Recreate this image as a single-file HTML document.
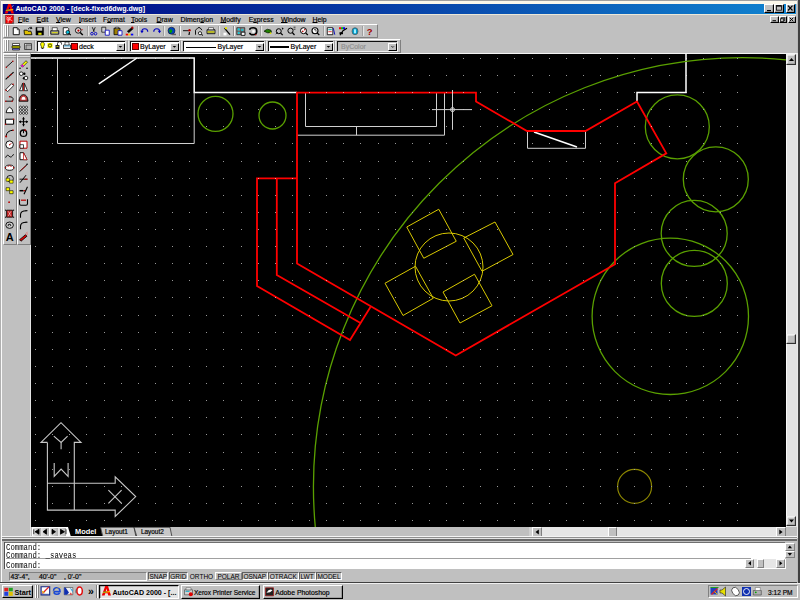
<!DOCTYPE html><html><head><meta charset="utf-8"><style>html,body{margin:0;padding:0;}body{width:800px;height:600px;overflow:hidden;position:relative;background:#c0c0c0;font-family:"Liberation Sans",sans-serif}</style></head><body>
<div style="position:absolute;left:0px;top:0px;width:800px;height:1px;background:#a0a0a0;"></div>
<div style="position:absolute;left:0px;top:1px;width:797px;height:2.5px;background:#fbf7ea;"></div>
<div style="position:absolute;left:0px;top:0px;width:1px;height:583px;background:#b0b0b0;"></div>
<div style="position:absolute;left:1px;top:1px;width:1.3px;height:582px;background:#fafafa;"></div>
<div style="position:absolute;left:3px;top:14px;width:793px;height:1px;background:#ece8d8;"></div>
<div style="position:absolute;left:798px;top:0px;width:2px;height:583px;background:#404040;"></div>
<div style="position:absolute;left:797px;top:0px;width:1px;height:583px;background:#b8b8b8;"></div>
<div style="position:absolute;left:796px;top:53px;width:1.5px;height:485px;background:#e8e8e8;"></div>
<div style="position:absolute;left:3px;top:3.5px;width:793px;height:10.5px;background:linear-gradient(to right,#000080 0%,#1084d0 100%)"></div>
<div style="position:absolute;left:15.4px;top:5.5px;font-family:'Liberation Sans', sans-serif;font-size:7.1px;line-height:1;color:#fff;font-weight:bold;white-space:nowrap;">AutoCAD 2000 - [deck-fixed6dwg.dwg]</div>
<div style="position:absolute;left:18px;top:17.1px;font-family:'Liberation Sans', sans-serif;font-size:6.9px;line-height:1;color:#000;font-weight:normal;white-space:nowrap;-webkit-text-stroke:0.18px #000;text-underline-offset:-0.2px;text-decoration-thickness:0.7px"><u>F</u>ile</div>
<div style="position:absolute;left:36.6px;top:17.1px;font-family:'Liberation Sans', sans-serif;font-size:6.9px;line-height:1;color:#000;font-weight:normal;white-space:nowrap;-webkit-text-stroke:0.18px #000;text-underline-offset:-0.2px;text-decoration-thickness:0.7px"><u>E</u>dit</div>
<div style="position:absolute;left:56px;top:17.1px;font-family:'Liberation Sans', sans-serif;font-size:6.9px;line-height:1;color:#000;font-weight:normal;white-space:nowrap;-webkit-text-stroke:0.18px #000;text-underline-offset:-0.2px;text-decoration-thickness:0.7px"><u>V</u>iew</div>
<div style="position:absolute;left:79px;top:17.1px;font-family:'Liberation Sans', sans-serif;font-size:6.9px;line-height:1;color:#000;font-weight:normal;white-space:nowrap;-webkit-text-stroke:0.18px #000;text-underline-offset:-0.2px;text-decoration-thickness:0.7px"><u>I</u>nsert</div>
<div style="position:absolute;left:103px;top:17.1px;font-family:'Liberation Sans', sans-serif;font-size:6.9px;line-height:1;color:#000;font-weight:normal;white-space:nowrap;-webkit-text-stroke:0.18px #000;text-underline-offset:-0.2px;text-decoration-thickness:0.7px">F<u>o</u>rmat</div>
<div style="position:absolute;left:131px;top:17.1px;font-family:'Liberation Sans', sans-serif;font-size:6.9px;line-height:1;color:#000;font-weight:normal;white-space:nowrap;-webkit-text-stroke:0.18px #000;text-underline-offset:-0.2px;text-decoration-thickness:0.7px"><u>T</u>ools</div>
<div style="position:absolute;left:156.6px;top:17.1px;font-family:'Liberation Sans', sans-serif;font-size:6.9px;line-height:1;color:#000;font-weight:normal;white-space:nowrap;-webkit-text-stroke:0.18px #000;text-underline-offset:-0.2px;text-decoration-thickness:0.7px"><u>D</u>raw</div>
<div style="position:absolute;left:180.5px;top:17.1px;font-family:'Liberation Sans', sans-serif;font-size:6.9px;line-height:1;color:#000;font-weight:normal;white-space:nowrap;-webkit-text-stroke:0.18px #000;text-underline-offset:-0.2px;text-decoration-thickness:0.7px">Dimen<u>s</u>ion</div>
<div style="position:absolute;left:220.4px;top:17.1px;font-family:'Liberation Sans', sans-serif;font-size:6.9px;line-height:1;color:#000;font-weight:normal;white-space:nowrap;-webkit-text-stroke:0.18px #000;text-underline-offset:-0.2px;text-decoration-thickness:0.7px"><u>M</u>odify</div>
<div style="position:absolute;left:248.7px;top:17.1px;font-family:'Liberation Sans', sans-serif;font-size:6.9px;line-height:1;color:#000;font-weight:normal;white-space:nowrap;-webkit-text-stroke:0.18px #000;text-underline-offset:-0.2px;text-decoration-thickness:0.7px">E<u>x</u>press</div>
<div style="position:absolute;left:281px;top:17.1px;font-family:'Liberation Sans', sans-serif;font-size:6.9px;line-height:1;color:#000;font-weight:normal;white-space:nowrap;-webkit-text-stroke:0.18px #000;text-underline-offset:-0.2px;text-decoration-thickness:0.7px"><u>W</u>indow</div>
<div style="position:absolute;left:312.5px;top:17.1px;font-family:'Liberation Sans', sans-serif;font-size:6.9px;line-height:1;color:#000;font-weight:normal;white-space:nowrap;-webkit-text-stroke:0.18px #000;text-underline-offset:-0.2px;text-decoration-thickness:0.7px"><u>H</u>elp</div>
<div style="position:absolute;left:3px;top:24px;width:375px;height:14px;background:#c0c0c0;box-sizing:border-box;border-top:1px solid #fff;border-left:1px solid #fff;border-right:1px solid #808080;border-bottom:1px solid #808080"></div>
<div style="position:absolute;left:3px;top:39px;width:397.5px;height:13.5px;background:#c0c0c0;box-sizing:border-box;border-top:1px solid #fff;border-left:1px solid #fff;border-right:1px solid #808080;border-bottom:1px solid #808080"></div>
<div style="position:absolute;left:3px;top:52.6px;width:794px;height:1px;background:#f4f4f4;"></div>
<div style="position:absolute;left:3px;top:53px;width:14px;height:192px;background:#c0c0c0;box-sizing:border-box;border-top:1px solid #fff;border-left:1px solid #fff;border-right:1px solid #808080;border-bottom:1px solid #808080"></div>
<div style="position:absolute;left:17px;top:53px;width:14px;height:192px;background:#c0c0c0;box-sizing:border-box;border-top:1px solid #fff;border-left:1px solid #fff;border-right:1px solid #808080;border-bottom:1px solid #808080"></div>
<div style="position:absolute;left:31px;top:53.5px;width:755px;height:473.5px;background:#000;"></div>
<svg style="position:absolute;left:0;top:0" width="800" height="600" viewBox="0 0 800 600"><defs><clipPath id="dc"><rect x="31" y="53.5" width="755" height="473.5"/></clipPath></defs><g clip-path="url(#dc)"><path d="M31 58.1 L194.2 58.1 L194.2 92.6 L297 92.6" fill="none" stroke="#ffffff" stroke-width="1.5" stroke-linejoin="miter"/><path d="M57.5 58 L57.5 143.5 L194.2 143.5 L194.2 92.6" fill="none" stroke="#d0d0d0" stroke-width="1.0" stroke-linejoin="miter"/><path d="M137 58 L98.8 83.8" fill="none" stroke="#ffffff" stroke-width="1.5" stroke-linejoin="miter"/><path d="M686 53 L686 92.5 L637 92.5 L637 101.5" fill="none" stroke="#ffffff" stroke-width="1.5" stroke-linejoin="miter"/><path d="M305.5 93 L305.5 126.5 L436.5 126.5 L436.5 93" fill="none" stroke="#d0d0d0" stroke-width="1.0" stroke-linejoin="miter"/><path d="M297 135.2 L444.5 135.2 L444.5 93" fill="none" stroke="#d0d0d0" stroke-width="1.0" stroke-linejoin="miter"/><path d="M356.5 126.5 L356.5 135.2" fill="none" stroke="#d0d0d0" stroke-width="1.0" stroke-linejoin="miter"/><path d="M527.5 131 L527.5 148.3 L585.5 148.3 L585.5 131" fill="none" stroke="#d0d0d0" stroke-width="1.0" stroke-linejoin="miter"/><path d="M534 132 L577 147" fill="none" stroke="#ffffff" stroke-width="1.5" stroke-linejoin="miter"/><circle cx="215.5" cy="113.8" r="17.5" fill="none" stroke="#5aa000" stroke-width="1.3"/><circle cx="272.5" cy="115.5" r="13.5" fill="none" stroke="#5aa000" stroke-width="1.3"/><circle cx="677.3" cy="126.8" r="32" fill="none" stroke="#5aa000" stroke-width="1.3"/><circle cx="715.8" cy="179.3" r="32.5" fill="none" stroke="#5aa000" stroke-width="1.3"/><circle cx="694.2" cy="233.4" r="33" fill="none" stroke="#5aa000" stroke-width="1.3"/><circle cx="694.3" cy="283.4" r="33" fill="none" stroke="#5aa000" stroke-width="1.3"/><circle cx="670.3" cy="316.3" r="78.2" fill="none" stroke="#5aa000" stroke-width="1.3"/><circle cx="742.46" cy="486.64" r="429.03" fill="none" stroke="#5aa000" stroke-width="1.3"/><circle cx="634.6" cy="486.4" r="17" fill="none" stroke="#8c8600" stroke-width="1.2"/><circle cx="449" cy="267" r="34" fill="none" stroke="#d8c800" stroke-width="1.0"/><path d="M406.75 227 L438.75 209.25 L456.25 241.25 L423.75 258.25 Z" fill="none" stroke="#d8c800" stroke-width="1.0" stroke-linejoin="miter"/><path d="M463.75 238 L495 222 L513 254.5 L482 271.25 Z" fill="none" stroke="#d8c800" stroke-width="1.0" stroke-linejoin="miter"/><path d="M443 292 L474.5 274.25 L492 305.75 L460 323 Z" fill="none" stroke="#d8c800" stroke-width="1.0" stroke-linejoin="miter"/><path d="M385 283.25 L415.5 266.25 L433.25 298.25 L403 315.5 Z" fill="none" stroke="#d8c800" stroke-width="1.0" stroke-linejoin="miter"/><path d="M297 92.6 L476 92.6 L476 101.5 L527 131 L585.5 131 L637 101.5 L666.3 153.4 L615 183.3 L615 264.2 L455.75 355.5 L297 263.6 Z" fill="none" stroke="#ff0000" stroke-width="1.8" stroke-linejoin="miter"/><path d="M297 178.3 L257 178.3 L257 286 L350 340 L370.5 307" fill="none" stroke="#ff0000" stroke-width="1.8" stroke-linejoin="miter"/><path d="M276.8 178.3 L276.8 275 L360.5 323" fill="none" stroke="#ff0000" stroke-width="1.8" stroke-linejoin="miter"/><path d="M452.5 90 L452.5 129.8" fill="none" stroke="#d0d0d0" stroke-width="1.0" stroke-linejoin="miter"/><path d="M432 109.6 L472 109.6" fill="none" stroke="#d0d0d0" stroke-width="1.0" stroke-linejoin="miter"/><circle cx="452.5" cy="109.6" r="2" fill="none" stroke="#d0d0d0" stroke-width="1"/><path d="M47.4 442.4 L41 442.4 L61 422.7 L81 442.4 L74.3 442.4 L74.3 510.1" fill="none" stroke="#c8c8c8" stroke-width="1.1" stroke-linejoin="miter"/><path d="M47.4 442.4 L47.4 510.1 L115.2 510.1 L115.2 516.5 L135.7 496.6 L115.2 476.8 L115.2 483.2 L47.4 483.2" fill="none" stroke="#c8c8c8" stroke-width="1.1" stroke-linejoin="miter"/><path d="M53.8 436.1 L61.1 442.5 L67.6 436.1" fill="none" stroke="#c8c8c8" stroke-width="1.1" stroke-linejoin="miter"/><path d="M61.1 442.5 L61.1 449.3" fill="none" stroke="#c8c8c8" stroke-width="1.1" stroke-linejoin="miter"/><path d="M54.2 463 L54.2 476.4 L61.1 469.1 L68.1 476.4 L68.1 463" fill="none" stroke="#c8c8c8" stroke-width="1.1" stroke-linejoin="miter"/><path d="M108.4 490.2 L121.6 503.4" fill="none" stroke="#c8c8c8" stroke-width="1.1" stroke-linejoin="miter"/><path d="M121.6 490.2 L108.4 503.4" fill="none" stroke="#c8c8c8" stroke-width="1.1" stroke-linejoin="miter"/><path d="M35 58h1v1h-1zM52 58h1v1h-1zM69 58h1v1h-1zM86 58h1v1h-1zM104 58h1v1h-1zM121 58h1v1h-1zM138 58h1v1h-1zM155 58h1v1h-1zM172 58h1v1h-1zM189 58h1v1h-1zM206 58h1v1h-1zM223 58h1v1h-1zM241 58h1v1h-1zM258 58h1v1h-1zM275 58h1v1h-1zM292 58h1v1h-1zM309 58h1v1h-1zM326 58h1v1h-1zM343 58h1v1h-1zM360 58h1v1h-1zM378 58h1v1h-1zM395 58h1v1h-1zM412 58h1v1h-1zM429 58h1v1h-1zM446 58h1v1h-1zM463 58h1v1h-1zM480 58h1v1h-1zM497 58h1v1h-1zM514 58h1v1h-1zM532 58h1v1h-1zM549 58h1v1h-1zM566 58h1v1h-1zM583 58h1v1h-1zM600 58h1v1h-1zM617 58h1v1h-1zM634 58h1v1h-1zM651 58h1v1h-1zM669 58h1v1h-1zM686 58h1v1h-1zM703 58h1v1h-1zM720 58h1v1h-1zM737 58h1v1h-1zM35 75h1v1h-1zM52 75h1v1h-1zM69 75h1v1h-1zM86 75h1v1h-1zM104 75h1v1h-1zM121 75h1v1h-1zM138 75h1v1h-1zM155 75h1v1h-1zM172 75h1v1h-1zM189 75h1v1h-1zM206 75h1v1h-1zM223 75h1v1h-1zM241 75h1v1h-1zM258 75h1v1h-1zM275 75h1v1h-1zM292 75h1v1h-1zM309 75h1v1h-1zM326 75h1v1h-1zM343 75h1v1h-1zM360 75h1v1h-1zM378 75h1v1h-1zM395 75h1v1h-1zM412 75h1v1h-1zM429 75h1v1h-1zM446 75h1v1h-1zM463 75h1v1h-1zM480 75h1v1h-1zM497 75h1v1h-1zM514 75h1v1h-1zM532 75h1v1h-1zM549 75h1v1h-1zM566 75h1v1h-1zM583 75h1v1h-1zM600 75h1v1h-1zM617 75h1v1h-1zM634 75h1v1h-1zM651 75h1v1h-1zM669 75h1v1h-1zM686 75h1v1h-1zM703 75h1v1h-1zM720 75h1v1h-1zM737 75h1v1h-1zM35 92h1v1h-1zM52 92h1v1h-1zM69 92h1v1h-1zM86 92h1v1h-1zM104 92h1v1h-1zM121 92h1v1h-1zM138 92h1v1h-1zM155 92h1v1h-1zM172 92h1v1h-1zM189 92h1v1h-1zM206 92h1v1h-1zM223 92h1v1h-1zM241 92h1v1h-1zM258 92h1v1h-1zM275 92h1v1h-1zM292 92h1v1h-1zM309 92h1v1h-1zM326 92h1v1h-1zM343 92h1v1h-1zM360 92h1v1h-1zM378 92h1v1h-1zM395 92h1v1h-1zM412 92h1v1h-1zM429 92h1v1h-1zM446 92h1v1h-1zM463 92h1v1h-1zM480 92h1v1h-1zM497 92h1v1h-1zM514 92h1v1h-1zM532 92h1v1h-1zM549 92h1v1h-1zM566 92h1v1h-1zM583 92h1v1h-1zM600 92h1v1h-1zM617 92h1v1h-1zM634 92h1v1h-1zM651 92h1v1h-1zM669 92h1v1h-1zM686 92h1v1h-1zM703 92h1v1h-1zM720 92h1v1h-1zM737 92h1v1h-1zM35 109h1v1h-1zM52 109h1v1h-1zM69 109h1v1h-1zM86 109h1v1h-1zM104 109h1v1h-1zM121 109h1v1h-1zM138 109h1v1h-1zM155 109h1v1h-1zM172 109h1v1h-1zM189 109h1v1h-1zM206 109h1v1h-1zM223 109h1v1h-1zM241 109h1v1h-1zM258 109h1v1h-1zM275 109h1v1h-1zM292 109h1v1h-1zM309 109h1v1h-1zM326 109h1v1h-1zM343 109h1v1h-1zM360 109h1v1h-1zM378 109h1v1h-1zM395 109h1v1h-1zM412 109h1v1h-1zM429 109h1v1h-1zM446 109h1v1h-1zM463 109h1v1h-1zM480 109h1v1h-1zM497 109h1v1h-1zM514 109h1v1h-1zM532 109h1v1h-1zM549 109h1v1h-1zM566 109h1v1h-1zM583 109h1v1h-1zM600 109h1v1h-1zM617 109h1v1h-1zM634 109h1v1h-1zM651 109h1v1h-1zM669 109h1v1h-1zM686 109h1v1h-1zM703 109h1v1h-1zM720 109h1v1h-1zM737 109h1v1h-1zM35 126h1v1h-1zM52 126h1v1h-1zM69 126h1v1h-1zM86 126h1v1h-1zM104 126h1v1h-1zM121 126h1v1h-1zM138 126h1v1h-1zM155 126h1v1h-1zM172 126h1v1h-1zM189 126h1v1h-1zM206 126h1v1h-1zM223 126h1v1h-1zM241 126h1v1h-1zM258 126h1v1h-1zM275 126h1v1h-1zM292 126h1v1h-1zM309 126h1v1h-1zM326 126h1v1h-1zM343 126h1v1h-1zM360 126h1v1h-1zM378 126h1v1h-1zM395 126h1v1h-1zM412 126h1v1h-1zM429 126h1v1h-1zM446 126h1v1h-1zM463 126h1v1h-1zM480 126h1v1h-1zM497 126h1v1h-1zM514 126h1v1h-1zM532 126h1v1h-1zM549 126h1v1h-1zM566 126h1v1h-1zM583 126h1v1h-1zM600 126h1v1h-1zM617 126h1v1h-1zM634 126h1v1h-1zM651 126h1v1h-1zM669 126h1v1h-1zM686 126h1v1h-1zM703 126h1v1h-1zM720 126h1v1h-1zM737 126h1v1h-1zM35 143h1v1h-1zM52 143h1v1h-1zM69 143h1v1h-1zM86 143h1v1h-1zM104 143h1v1h-1zM121 143h1v1h-1zM138 143h1v1h-1zM155 143h1v1h-1zM172 143h1v1h-1zM189 143h1v1h-1zM206 143h1v1h-1zM223 143h1v1h-1zM241 143h1v1h-1zM258 143h1v1h-1zM275 143h1v1h-1zM292 143h1v1h-1zM309 143h1v1h-1zM326 143h1v1h-1zM343 143h1v1h-1zM360 143h1v1h-1zM378 143h1v1h-1zM395 143h1v1h-1zM412 143h1v1h-1zM429 143h1v1h-1zM446 143h1v1h-1zM463 143h1v1h-1zM480 143h1v1h-1zM497 143h1v1h-1zM514 143h1v1h-1zM532 143h1v1h-1zM549 143h1v1h-1zM566 143h1v1h-1zM583 143h1v1h-1zM600 143h1v1h-1zM617 143h1v1h-1zM634 143h1v1h-1zM651 143h1v1h-1zM669 143h1v1h-1zM686 143h1v1h-1zM703 143h1v1h-1zM720 143h1v1h-1zM737 143h1v1h-1zM35 161h1v1h-1zM52 161h1v1h-1zM69 161h1v1h-1zM86 161h1v1h-1zM104 161h1v1h-1zM121 161h1v1h-1zM138 161h1v1h-1zM155 161h1v1h-1zM172 161h1v1h-1zM189 161h1v1h-1zM206 161h1v1h-1zM223 161h1v1h-1zM241 161h1v1h-1zM258 161h1v1h-1zM275 161h1v1h-1zM292 161h1v1h-1zM309 161h1v1h-1zM326 161h1v1h-1zM343 161h1v1h-1zM360 161h1v1h-1zM378 161h1v1h-1zM395 161h1v1h-1zM412 161h1v1h-1zM429 161h1v1h-1zM446 161h1v1h-1zM463 161h1v1h-1zM480 161h1v1h-1zM497 161h1v1h-1zM514 161h1v1h-1zM532 161h1v1h-1zM549 161h1v1h-1zM566 161h1v1h-1zM583 161h1v1h-1zM600 161h1v1h-1zM617 161h1v1h-1zM634 161h1v1h-1zM651 161h1v1h-1zM669 161h1v1h-1zM686 161h1v1h-1zM703 161h1v1h-1zM720 161h1v1h-1zM737 161h1v1h-1zM35 178h1v1h-1zM52 178h1v1h-1zM69 178h1v1h-1zM86 178h1v1h-1zM104 178h1v1h-1zM121 178h1v1h-1zM138 178h1v1h-1zM155 178h1v1h-1zM172 178h1v1h-1zM189 178h1v1h-1zM206 178h1v1h-1zM223 178h1v1h-1zM241 178h1v1h-1zM258 178h1v1h-1zM275 178h1v1h-1zM292 178h1v1h-1zM309 178h1v1h-1zM326 178h1v1h-1zM343 178h1v1h-1zM360 178h1v1h-1zM378 178h1v1h-1zM395 178h1v1h-1zM412 178h1v1h-1zM429 178h1v1h-1zM446 178h1v1h-1zM463 178h1v1h-1zM480 178h1v1h-1zM497 178h1v1h-1zM514 178h1v1h-1zM532 178h1v1h-1zM549 178h1v1h-1zM566 178h1v1h-1zM583 178h1v1h-1zM600 178h1v1h-1zM617 178h1v1h-1zM634 178h1v1h-1zM651 178h1v1h-1zM669 178h1v1h-1zM686 178h1v1h-1zM703 178h1v1h-1zM720 178h1v1h-1zM737 178h1v1h-1zM35 195h1v1h-1zM52 195h1v1h-1zM69 195h1v1h-1zM86 195h1v1h-1zM104 195h1v1h-1zM121 195h1v1h-1zM138 195h1v1h-1zM155 195h1v1h-1zM172 195h1v1h-1zM189 195h1v1h-1zM206 195h1v1h-1zM223 195h1v1h-1zM241 195h1v1h-1zM258 195h1v1h-1zM275 195h1v1h-1zM292 195h1v1h-1zM309 195h1v1h-1zM326 195h1v1h-1zM343 195h1v1h-1zM360 195h1v1h-1zM378 195h1v1h-1zM395 195h1v1h-1zM412 195h1v1h-1zM429 195h1v1h-1zM446 195h1v1h-1zM463 195h1v1h-1zM480 195h1v1h-1zM497 195h1v1h-1zM514 195h1v1h-1zM532 195h1v1h-1zM549 195h1v1h-1zM566 195h1v1h-1zM583 195h1v1h-1zM600 195h1v1h-1zM617 195h1v1h-1zM634 195h1v1h-1zM651 195h1v1h-1zM669 195h1v1h-1zM686 195h1v1h-1zM703 195h1v1h-1zM720 195h1v1h-1zM737 195h1v1h-1zM35 212h1v1h-1zM52 212h1v1h-1zM69 212h1v1h-1zM86 212h1v1h-1zM104 212h1v1h-1zM121 212h1v1h-1zM138 212h1v1h-1zM155 212h1v1h-1zM172 212h1v1h-1zM189 212h1v1h-1zM206 212h1v1h-1zM223 212h1v1h-1zM241 212h1v1h-1zM258 212h1v1h-1zM275 212h1v1h-1zM292 212h1v1h-1zM309 212h1v1h-1zM326 212h1v1h-1zM343 212h1v1h-1zM360 212h1v1h-1zM378 212h1v1h-1zM395 212h1v1h-1zM412 212h1v1h-1zM429 212h1v1h-1zM446 212h1v1h-1zM463 212h1v1h-1zM480 212h1v1h-1zM497 212h1v1h-1zM514 212h1v1h-1zM532 212h1v1h-1zM549 212h1v1h-1zM566 212h1v1h-1zM583 212h1v1h-1zM600 212h1v1h-1zM617 212h1v1h-1zM634 212h1v1h-1zM651 212h1v1h-1zM669 212h1v1h-1zM686 212h1v1h-1zM703 212h1v1h-1zM720 212h1v1h-1zM737 212h1v1h-1zM35 229h1v1h-1zM52 229h1v1h-1zM69 229h1v1h-1zM86 229h1v1h-1zM104 229h1v1h-1zM121 229h1v1h-1zM138 229h1v1h-1zM155 229h1v1h-1zM172 229h1v1h-1zM189 229h1v1h-1zM206 229h1v1h-1zM223 229h1v1h-1zM241 229h1v1h-1zM258 229h1v1h-1zM275 229h1v1h-1zM292 229h1v1h-1zM309 229h1v1h-1zM326 229h1v1h-1zM343 229h1v1h-1zM360 229h1v1h-1zM378 229h1v1h-1zM395 229h1v1h-1zM412 229h1v1h-1zM429 229h1v1h-1zM446 229h1v1h-1zM463 229h1v1h-1zM480 229h1v1h-1zM497 229h1v1h-1zM514 229h1v1h-1zM532 229h1v1h-1zM549 229h1v1h-1zM566 229h1v1h-1zM583 229h1v1h-1zM600 229h1v1h-1zM617 229h1v1h-1zM634 229h1v1h-1zM651 229h1v1h-1zM669 229h1v1h-1zM686 229h1v1h-1zM703 229h1v1h-1zM720 229h1v1h-1zM737 229h1v1h-1zM35 246h1v1h-1zM52 246h1v1h-1zM69 246h1v1h-1zM86 246h1v1h-1zM104 246h1v1h-1zM121 246h1v1h-1zM138 246h1v1h-1zM155 246h1v1h-1zM172 246h1v1h-1zM189 246h1v1h-1zM206 246h1v1h-1zM223 246h1v1h-1zM241 246h1v1h-1zM258 246h1v1h-1zM275 246h1v1h-1zM292 246h1v1h-1zM309 246h1v1h-1zM326 246h1v1h-1zM343 246h1v1h-1zM360 246h1v1h-1zM378 246h1v1h-1zM395 246h1v1h-1zM412 246h1v1h-1zM429 246h1v1h-1zM446 246h1v1h-1zM463 246h1v1h-1zM480 246h1v1h-1zM497 246h1v1h-1zM514 246h1v1h-1zM532 246h1v1h-1zM549 246h1v1h-1zM566 246h1v1h-1zM583 246h1v1h-1zM600 246h1v1h-1zM617 246h1v1h-1zM634 246h1v1h-1zM651 246h1v1h-1zM669 246h1v1h-1zM686 246h1v1h-1zM703 246h1v1h-1zM720 246h1v1h-1zM737 246h1v1h-1zM35 263h1v1h-1zM52 263h1v1h-1zM69 263h1v1h-1zM86 263h1v1h-1zM104 263h1v1h-1zM121 263h1v1h-1zM138 263h1v1h-1zM155 263h1v1h-1zM172 263h1v1h-1zM189 263h1v1h-1zM206 263h1v1h-1zM223 263h1v1h-1zM241 263h1v1h-1zM258 263h1v1h-1zM275 263h1v1h-1zM292 263h1v1h-1zM309 263h1v1h-1zM326 263h1v1h-1zM343 263h1v1h-1zM360 263h1v1h-1zM378 263h1v1h-1zM395 263h1v1h-1zM412 263h1v1h-1zM429 263h1v1h-1zM446 263h1v1h-1zM463 263h1v1h-1zM480 263h1v1h-1zM497 263h1v1h-1zM514 263h1v1h-1zM532 263h1v1h-1zM549 263h1v1h-1zM566 263h1v1h-1zM583 263h1v1h-1zM600 263h1v1h-1zM617 263h1v1h-1zM634 263h1v1h-1zM651 263h1v1h-1zM669 263h1v1h-1zM686 263h1v1h-1zM703 263h1v1h-1zM720 263h1v1h-1zM737 263h1v1h-1zM35 280h1v1h-1zM52 280h1v1h-1zM69 280h1v1h-1zM86 280h1v1h-1zM104 280h1v1h-1zM121 280h1v1h-1zM138 280h1v1h-1zM155 280h1v1h-1zM172 280h1v1h-1zM189 280h1v1h-1zM206 280h1v1h-1zM223 280h1v1h-1zM241 280h1v1h-1zM258 280h1v1h-1zM275 280h1v1h-1zM292 280h1v1h-1zM309 280h1v1h-1zM326 280h1v1h-1zM343 280h1v1h-1zM360 280h1v1h-1zM378 280h1v1h-1zM395 280h1v1h-1zM412 280h1v1h-1zM429 280h1v1h-1zM446 280h1v1h-1zM463 280h1v1h-1zM480 280h1v1h-1zM497 280h1v1h-1zM514 280h1v1h-1zM532 280h1v1h-1zM549 280h1v1h-1zM566 280h1v1h-1zM583 280h1v1h-1zM600 280h1v1h-1zM617 280h1v1h-1zM634 280h1v1h-1zM651 280h1v1h-1zM669 280h1v1h-1zM686 280h1v1h-1zM703 280h1v1h-1zM720 280h1v1h-1zM737 280h1v1h-1zM35 297h1v1h-1zM52 297h1v1h-1zM69 297h1v1h-1zM86 297h1v1h-1zM104 297h1v1h-1zM121 297h1v1h-1zM138 297h1v1h-1zM155 297h1v1h-1zM172 297h1v1h-1zM189 297h1v1h-1zM206 297h1v1h-1zM223 297h1v1h-1zM241 297h1v1h-1zM258 297h1v1h-1zM275 297h1v1h-1zM292 297h1v1h-1zM309 297h1v1h-1zM326 297h1v1h-1zM343 297h1v1h-1zM360 297h1v1h-1zM378 297h1v1h-1zM395 297h1v1h-1zM412 297h1v1h-1zM429 297h1v1h-1zM446 297h1v1h-1zM463 297h1v1h-1zM480 297h1v1h-1zM497 297h1v1h-1zM514 297h1v1h-1zM532 297h1v1h-1zM549 297h1v1h-1zM566 297h1v1h-1zM583 297h1v1h-1zM600 297h1v1h-1zM617 297h1v1h-1zM634 297h1v1h-1zM651 297h1v1h-1zM669 297h1v1h-1zM686 297h1v1h-1zM703 297h1v1h-1zM720 297h1v1h-1zM737 297h1v1h-1zM35 315h1v1h-1zM52 315h1v1h-1zM69 315h1v1h-1zM86 315h1v1h-1zM104 315h1v1h-1zM121 315h1v1h-1zM138 315h1v1h-1zM155 315h1v1h-1zM172 315h1v1h-1zM189 315h1v1h-1zM206 315h1v1h-1zM223 315h1v1h-1zM241 315h1v1h-1zM258 315h1v1h-1zM275 315h1v1h-1zM292 315h1v1h-1zM309 315h1v1h-1zM326 315h1v1h-1zM343 315h1v1h-1zM360 315h1v1h-1zM378 315h1v1h-1zM395 315h1v1h-1zM412 315h1v1h-1zM429 315h1v1h-1zM446 315h1v1h-1zM463 315h1v1h-1zM480 315h1v1h-1zM497 315h1v1h-1zM514 315h1v1h-1zM532 315h1v1h-1zM549 315h1v1h-1zM566 315h1v1h-1zM583 315h1v1h-1zM600 315h1v1h-1zM617 315h1v1h-1zM634 315h1v1h-1zM651 315h1v1h-1zM669 315h1v1h-1zM686 315h1v1h-1zM703 315h1v1h-1zM720 315h1v1h-1zM737 315h1v1h-1zM35 332h1v1h-1zM52 332h1v1h-1zM69 332h1v1h-1zM86 332h1v1h-1zM104 332h1v1h-1zM121 332h1v1h-1zM138 332h1v1h-1zM155 332h1v1h-1zM172 332h1v1h-1zM189 332h1v1h-1zM206 332h1v1h-1zM223 332h1v1h-1zM241 332h1v1h-1zM258 332h1v1h-1zM275 332h1v1h-1zM292 332h1v1h-1zM309 332h1v1h-1zM326 332h1v1h-1zM343 332h1v1h-1zM360 332h1v1h-1zM378 332h1v1h-1zM395 332h1v1h-1zM412 332h1v1h-1zM429 332h1v1h-1zM446 332h1v1h-1zM463 332h1v1h-1zM480 332h1v1h-1zM497 332h1v1h-1zM514 332h1v1h-1zM532 332h1v1h-1zM549 332h1v1h-1zM566 332h1v1h-1zM583 332h1v1h-1zM600 332h1v1h-1zM617 332h1v1h-1zM634 332h1v1h-1zM651 332h1v1h-1zM669 332h1v1h-1zM686 332h1v1h-1zM703 332h1v1h-1zM720 332h1v1h-1zM737 332h1v1h-1zM35 349h1v1h-1zM52 349h1v1h-1zM69 349h1v1h-1zM86 349h1v1h-1zM104 349h1v1h-1zM121 349h1v1h-1zM138 349h1v1h-1zM155 349h1v1h-1zM172 349h1v1h-1zM189 349h1v1h-1zM206 349h1v1h-1zM223 349h1v1h-1zM241 349h1v1h-1zM258 349h1v1h-1zM275 349h1v1h-1zM292 349h1v1h-1zM309 349h1v1h-1zM326 349h1v1h-1zM343 349h1v1h-1zM360 349h1v1h-1zM378 349h1v1h-1zM395 349h1v1h-1zM412 349h1v1h-1zM429 349h1v1h-1zM446 349h1v1h-1zM463 349h1v1h-1zM480 349h1v1h-1zM497 349h1v1h-1zM514 349h1v1h-1zM532 349h1v1h-1zM549 349h1v1h-1zM566 349h1v1h-1zM583 349h1v1h-1zM600 349h1v1h-1zM617 349h1v1h-1zM634 349h1v1h-1zM651 349h1v1h-1zM669 349h1v1h-1zM686 349h1v1h-1zM703 349h1v1h-1zM720 349h1v1h-1zM737 349h1v1h-1zM35 366h1v1h-1zM52 366h1v1h-1zM69 366h1v1h-1zM86 366h1v1h-1zM104 366h1v1h-1zM121 366h1v1h-1zM138 366h1v1h-1zM155 366h1v1h-1zM172 366h1v1h-1zM189 366h1v1h-1zM206 366h1v1h-1zM223 366h1v1h-1zM241 366h1v1h-1zM258 366h1v1h-1zM275 366h1v1h-1zM292 366h1v1h-1zM309 366h1v1h-1zM326 366h1v1h-1zM343 366h1v1h-1zM360 366h1v1h-1zM378 366h1v1h-1zM395 366h1v1h-1zM412 366h1v1h-1zM429 366h1v1h-1zM446 366h1v1h-1zM463 366h1v1h-1zM480 366h1v1h-1zM497 366h1v1h-1zM514 366h1v1h-1zM532 366h1v1h-1zM549 366h1v1h-1zM566 366h1v1h-1zM583 366h1v1h-1zM600 366h1v1h-1zM617 366h1v1h-1zM634 366h1v1h-1zM651 366h1v1h-1zM669 366h1v1h-1zM686 366h1v1h-1zM703 366h1v1h-1zM720 366h1v1h-1zM737 366h1v1h-1zM35 383h1v1h-1zM52 383h1v1h-1zM69 383h1v1h-1zM86 383h1v1h-1zM104 383h1v1h-1zM121 383h1v1h-1zM138 383h1v1h-1zM155 383h1v1h-1zM172 383h1v1h-1zM189 383h1v1h-1zM206 383h1v1h-1zM223 383h1v1h-1zM241 383h1v1h-1zM258 383h1v1h-1zM275 383h1v1h-1zM292 383h1v1h-1zM309 383h1v1h-1zM326 383h1v1h-1zM343 383h1v1h-1zM360 383h1v1h-1zM378 383h1v1h-1zM395 383h1v1h-1zM412 383h1v1h-1zM429 383h1v1h-1zM446 383h1v1h-1zM463 383h1v1h-1zM480 383h1v1h-1zM497 383h1v1h-1zM514 383h1v1h-1zM532 383h1v1h-1zM549 383h1v1h-1zM566 383h1v1h-1zM583 383h1v1h-1zM600 383h1v1h-1zM617 383h1v1h-1zM634 383h1v1h-1zM651 383h1v1h-1zM669 383h1v1h-1zM686 383h1v1h-1zM703 383h1v1h-1zM720 383h1v1h-1zM737 383h1v1h-1zM35 400h1v1h-1zM52 400h1v1h-1zM69 400h1v1h-1zM86 400h1v1h-1zM104 400h1v1h-1zM121 400h1v1h-1zM138 400h1v1h-1zM155 400h1v1h-1zM172 400h1v1h-1zM189 400h1v1h-1zM206 400h1v1h-1zM223 400h1v1h-1zM241 400h1v1h-1zM258 400h1v1h-1zM275 400h1v1h-1zM292 400h1v1h-1zM309 400h1v1h-1zM326 400h1v1h-1zM343 400h1v1h-1zM360 400h1v1h-1zM378 400h1v1h-1zM395 400h1v1h-1zM412 400h1v1h-1zM429 400h1v1h-1zM446 400h1v1h-1zM463 400h1v1h-1zM480 400h1v1h-1zM497 400h1v1h-1zM514 400h1v1h-1zM532 400h1v1h-1zM549 400h1v1h-1zM566 400h1v1h-1zM583 400h1v1h-1zM600 400h1v1h-1zM617 400h1v1h-1zM634 400h1v1h-1zM651 400h1v1h-1zM669 400h1v1h-1zM686 400h1v1h-1zM703 400h1v1h-1zM720 400h1v1h-1zM737 400h1v1h-1zM35 417h1v1h-1zM52 417h1v1h-1zM69 417h1v1h-1zM86 417h1v1h-1zM104 417h1v1h-1zM121 417h1v1h-1zM138 417h1v1h-1zM155 417h1v1h-1zM172 417h1v1h-1zM189 417h1v1h-1zM206 417h1v1h-1zM223 417h1v1h-1zM241 417h1v1h-1zM258 417h1v1h-1zM275 417h1v1h-1zM292 417h1v1h-1zM309 417h1v1h-1zM326 417h1v1h-1zM343 417h1v1h-1zM360 417h1v1h-1zM378 417h1v1h-1zM395 417h1v1h-1zM412 417h1v1h-1zM429 417h1v1h-1zM446 417h1v1h-1zM463 417h1v1h-1zM480 417h1v1h-1zM497 417h1v1h-1zM514 417h1v1h-1zM532 417h1v1h-1zM549 417h1v1h-1zM566 417h1v1h-1zM583 417h1v1h-1zM600 417h1v1h-1zM617 417h1v1h-1zM634 417h1v1h-1zM651 417h1v1h-1zM669 417h1v1h-1zM686 417h1v1h-1zM703 417h1v1h-1zM720 417h1v1h-1zM737 417h1v1h-1zM35 434h1v1h-1zM52 434h1v1h-1zM69 434h1v1h-1zM86 434h1v1h-1zM104 434h1v1h-1zM121 434h1v1h-1zM138 434h1v1h-1zM155 434h1v1h-1zM172 434h1v1h-1zM189 434h1v1h-1zM206 434h1v1h-1zM223 434h1v1h-1zM241 434h1v1h-1zM258 434h1v1h-1zM275 434h1v1h-1zM292 434h1v1h-1zM309 434h1v1h-1zM326 434h1v1h-1zM343 434h1v1h-1zM360 434h1v1h-1zM378 434h1v1h-1zM395 434h1v1h-1zM412 434h1v1h-1zM429 434h1v1h-1zM446 434h1v1h-1zM463 434h1v1h-1zM480 434h1v1h-1zM497 434h1v1h-1zM514 434h1v1h-1zM532 434h1v1h-1zM549 434h1v1h-1zM566 434h1v1h-1zM583 434h1v1h-1zM600 434h1v1h-1zM617 434h1v1h-1zM634 434h1v1h-1zM651 434h1v1h-1zM669 434h1v1h-1zM686 434h1v1h-1zM703 434h1v1h-1zM720 434h1v1h-1zM737 434h1v1h-1zM35 452h1v1h-1zM52 452h1v1h-1zM69 452h1v1h-1zM86 452h1v1h-1zM104 452h1v1h-1zM121 452h1v1h-1zM138 452h1v1h-1zM155 452h1v1h-1zM172 452h1v1h-1zM189 452h1v1h-1zM206 452h1v1h-1zM223 452h1v1h-1zM241 452h1v1h-1zM258 452h1v1h-1zM275 452h1v1h-1zM292 452h1v1h-1zM309 452h1v1h-1zM326 452h1v1h-1zM343 452h1v1h-1zM360 452h1v1h-1zM378 452h1v1h-1zM395 452h1v1h-1zM412 452h1v1h-1zM429 452h1v1h-1zM446 452h1v1h-1zM463 452h1v1h-1zM480 452h1v1h-1zM497 452h1v1h-1zM514 452h1v1h-1zM532 452h1v1h-1zM549 452h1v1h-1zM566 452h1v1h-1zM583 452h1v1h-1zM600 452h1v1h-1zM617 452h1v1h-1zM634 452h1v1h-1zM651 452h1v1h-1zM669 452h1v1h-1zM686 452h1v1h-1zM703 452h1v1h-1zM720 452h1v1h-1zM737 452h1v1h-1zM35 469h1v1h-1zM52 469h1v1h-1zM69 469h1v1h-1zM86 469h1v1h-1zM104 469h1v1h-1zM121 469h1v1h-1zM138 469h1v1h-1zM155 469h1v1h-1zM172 469h1v1h-1zM189 469h1v1h-1zM206 469h1v1h-1zM223 469h1v1h-1zM241 469h1v1h-1zM258 469h1v1h-1zM275 469h1v1h-1zM292 469h1v1h-1zM309 469h1v1h-1zM326 469h1v1h-1zM343 469h1v1h-1zM360 469h1v1h-1zM378 469h1v1h-1zM395 469h1v1h-1zM412 469h1v1h-1zM429 469h1v1h-1zM446 469h1v1h-1zM463 469h1v1h-1zM480 469h1v1h-1zM497 469h1v1h-1zM514 469h1v1h-1zM532 469h1v1h-1zM549 469h1v1h-1zM566 469h1v1h-1zM583 469h1v1h-1zM600 469h1v1h-1zM617 469h1v1h-1zM634 469h1v1h-1zM651 469h1v1h-1zM669 469h1v1h-1zM686 469h1v1h-1zM703 469h1v1h-1zM720 469h1v1h-1zM737 469h1v1h-1zM35 486h1v1h-1zM52 486h1v1h-1zM69 486h1v1h-1zM86 486h1v1h-1zM104 486h1v1h-1zM121 486h1v1h-1zM138 486h1v1h-1zM155 486h1v1h-1zM172 486h1v1h-1zM189 486h1v1h-1zM206 486h1v1h-1zM223 486h1v1h-1zM241 486h1v1h-1zM258 486h1v1h-1zM275 486h1v1h-1zM292 486h1v1h-1zM309 486h1v1h-1zM326 486h1v1h-1zM343 486h1v1h-1zM360 486h1v1h-1zM378 486h1v1h-1zM395 486h1v1h-1zM412 486h1v1h-1zM429 486h1v1h-1zM446 486h1v1h-1zM463 486h1v1h-1zM480 486h1v1h-1zM497 486h1v1h-1zM514 486h1v1h-1zM532 486h1v1h-1zM549 486h1v1h-1zM566 486h1v1h-1zM583 486h1v1h-1zM600 486h1v1h-1zM617 486h1v1h-1zM634 486h1v1h-1zM651 486h1v1h-1zM669 486h1v1h-1zM686 486h1v1h-1zM703 486h1v1h-1zM720 486h1v1h-1zM737 486h1v1h-1zM35 503h1v1h-1zM52 503h1v1h-1zM69 503h1v1h-1zM86 503h1v1h-1zM104 503h1v1h-1zM121 503h1v1h-1zM138 503h1v1h-1zM155 503h1v1h-1zM172 503h1v1h-1zM189 503h1v1h-1zM206 503h1v1h-1zM223 503h1v1h-1zM241 503h1v1h-1zM258 503h1v1h-1zM275 503h1v1h-1zM292 503h1v1h-1zM309 503h1v1h-1zM326 503h1v1h-1zM343 503h1v1h-1zM360 503h1v1h-1zM378 503h1v1h-1zM395 503h1v1h-1zM412 503h1v1h-1zM429 503h1v1h-1zM446 503h1v1h-1zM463 503h1v1h-1zM480 503h1v1h-1zM497 503h1v1h-1zM514 503h1v1h-1zM532 503h1v1h-1zM549 503h1v1h-1zM566 503h1v1h-1zM583 503h1v1h-1zM600 503h1v1h-1zM617 503h1v1h-1zM634 503h1v1h-1zM651 503h1v1h-1zM669 503h1v1h-1zM686 503h1v1h-1zM703 503h1v1h-1zM720 503h1v1h-1zM737 503h1v1h-1zM35 520h1v1h-1zM52 520h1v1h-1zM69 520h1v1h-1zM86 520h1v1h-1zM104 520h1v1h-1zM121 520h1v1h-1zM138 520h1v1h-1zM155 520h1v1h-1zM172 520h1v1h-1zM189 520h1v1h-1zM206 520h1v1h-1zM223 520h1v1h-1zM241 520h1v1h-1zM258 520h1v1h-1zM275 520h1v1h-1zM292 520h1v1h-1zM309 520h1v1h-1zM326 520h1v1h-1zM343 520h1v1h-1zM360 520h1v1h-1zM378 520h1v1h-1zM395 520h1v1h-1zM412 520h1v1h-1zM429 520h1v1h-1zM446 520h1v1h-1zM463 520h1v1h-1zM480 520h1v1h-1zM497 520h1v1h-1zM514 520h1v1h-1zM532 520h1v1h-1zM549 520h1v1h-1zM566 520h1v1h-1zM583 520h1v1h-1zM600 520h1v1h-1zM617 520h1v1h-1zM634 520h1v1h-1zM651 520h1v1h-1zM669 520h1v1h-1zM686 520h1v1h-1zM703 520h1v1h-1zM720 520h1v1h-1zM737 520h1v1h-1z" fill="#989898" style="mix-blend-mode:lighten" shape-rendering="crispEdges"/></g></svg>
<div style="position:absolute;left:30px;top:245px;width:1px;height:292px;background:#e4e4e4;"></div>
<div style="position:absolute;left:786px;top:53.5px;width:10.5px;height:473.5px;background:#e2e2e2;"></div>
<div style="position:absolute;left:786px;top:53.5px;width:1px;height:473.5px;background:#fafafa;"></div>
<div style="position:absolute;left:785.7px;top:54px;width:10px;height:10.5px;background:#c0c0c0;box-sizing:border-box;border-top:1px solid #f0f0f0;border-left:1px solid #f0f0f0;border-right:1px solid #303030;border-bottom:1px solid #303030;box-shadow:inset -0.6px -0.6px 0 #909090, inset 0.6px 0.6px 0 #fff"></div>
<div style="position:absolute;left:785.7px;top:515.8px;width:10px;height:10.5px;background:#c0c0c0;box-sizing:border-box;border-top:1px solid #f0f0f0;border-left:1px solid #f0f0f0;border-right:1px solid #303030;border-bottom:1px solid #303030;box-shadow:inset -0.6px -0.6px 0 #909090, inset 0.6px 0.6px 0 #fff"></div>
<div style="position:absolute;left:786px;top:333.5px;width:10px;height:10px;background:#c0c0c0;box-sizing:border-box;border-top:1px solid #f0f0f0;border-left:1px solid #f0f0f0;border-right:1px solid #303030;border-bottom:1px solid #303030;box-shadow:inset -0.6px -0.6px 0 #909090, inset 0.6px 0.6px 0 #fff"></div>
<div style="position:absolute;left:31px;top:527px;width:497.5px;height:10.5px;background:#c0c0c0;"></div>
<div style="position:absolute;left:31.6px;top:527px;width:39.4px;height:9.7px;background:#fff"></div>
<div style="position:absolute;left:32.6px;top:528px;width:8px;height:7.5px;background:linear-gradient(to right,#e8e8e8,#b0b0b0)"></div>
<div style="position:absolute;left:41.1px;top:528px;width:8px;height:7.5px;background:linear-gradient(to right,#e8e8e8,#b0b0b0)"></div>
<div style="position:absolute;left:49.6px;top:528px;width:8px;height:7.5px;background:linear-gradient(to right,#e8e8e8,#b0b0b0)"></div>
<div style="position:absolute;left:58.1px;top:528px;width:8px;height:7.5px;background:linear-gradient(to right,#e8e8e8,#b0b0b0)"></div>
<div style="position:absolute;left:31px;top:536.2px;width:40px;height:1px;background:#808080"></div>
<svg style="position:absolute;left:0;top:0" width="800" height="600"><path d="M68 527H100.5L102.5 537H71Z" fill="#000"/><path d="M100.5 527.3H134L136 537H103Z" fill="#c8c8c8" stroke="#202020" stroke-width="0.7"/><path d="M134 527.3H170L172 537H137Z" fill="#c8c8c8" stroke="#202020" stroke-width="0.7"/><path d="M33.8 529.3V534.2M39 529.3L35 531.75L39 534.2Z M46.5 529.3L43 531.75L46.5 534.2Z M52 529.3L55.5 531.75L52 534.2Z M60.5 529.3L64.5 531.75L60.5 534.2Z M66 529.3V534.2" fill="#000" stroke="#000" stroke-width="0.8"/></svg>
<div style="position:absolute;left:75px;top:528.3px;font-family:'Liberation Sans', sans-serif;font-size:7.4px;line-height:1;color:#fff;font-weight:bold;white-space:nowrap;">Model</div>
<div style="position:absolute;left:105px;top:529.1px;font-family:'Liberation Sans', sans-serif;font-size:6.45px;line-height:1;color:#000;font-weight:normal;white-space:nowrap;-webkit-text-stroke:0.18px #000;">Layout1</div>
<div style="position:absolute;left:141px;top:529.1px;font-family:'Liberation Sans', sans-serif;font-size:6.4px;line-height:1;color:#000;font-weight:normal;white-space:nowrap;-webkit-text-stroke:0.18px #000;">Layout2</div>
<div style="position:absolute;left:528.5px;top:527px;width:3.5px;height:10.5px;background:#d0d0d0;"></div>
<div style="position:absolute;left:542px;top:527px;width:234px;height:10.5px;background:#e6e6e6;"></div>
<div style="position:absolute;left:532.4px;top:527px;width:9.6px;height:10px;background:#c0c0c0;box-sizing:border-box;border-top:1px solid #fff;border-left:1px solid #fff;border-right:1px solid #808080;border-bottom:1px solid #808080"></div>
<div style="position:absolute;left:607.7px;top:527px;width:9.5px;height:10px;background:#c0c0c0;box-sizing:border-box;border-top:1px solid #fff;border-left:1px solid #fff;border-right:1px solid #808080;border-bottom:1px solid #808080"></div>
<div style="position:absolute;left:776px;top:527px;width:9.5px;height:10px;background:#c0c0c0;box-sizing:border-box;border-top:1px solid #fff;border-left:1px solid #fff;border-right:1px solid #808080;border-bottom:1px solid #808080"></div>
<div style="position:absolute;left:785.5px;top:527px;width:11.5px;height:10.5px;background:#c0c0c0;"></div>
<svg style="position:absolute;left:0;top:0" width="800" height="600"><path d="M538.8 529.5L535.5 532L538.8 534.5Z" fill="#000"/><path d="M779.3 529.5L782.6 532L779.3 534.5Z" fill="#000"/><path d="M789 61H794L791.5 58Z" fill="#000"/><path d="M789 519.5H794L791.5 522.5Z" fill="#000"/></svg>
<div style="position:absolute;left:2px;top:536px;width:795px;height:1px;background:#f4f4f4;"></div>
<div style="position:absolute;left:2px;top:537px;width:795px;height:1px;background:#909090;"></div>
<div style="position:absolute;left:2px;top:538px;width:795px;height:1px;background:#e4e4e4;"></div>
<div style="position:absolute;left:2px;top:539px;width:795px;height:2px;background:#6a6a6a;"></div>
<div style="position:absolute;left:2px;top:541px;width:795px;height:1px;background:#c0c0c0;"></div>
<div style="position:absolute;left:4px;top:542px;width:782px;height:26.5px;background:#fff;"></div>
<div style="position:absolute;left:4px;top:542px;width:782px;height:0.8px;background:#707070;"></div>
<div style="position:absolute;left:4px;top:542px;width:1.2px;height:26.5px;background:#505050;"></div>
<div style="position:absolute;left:5.5px;top:558.2px;width:745px;height:0.8px;background:#a0a0a0;"></div>
<div style="position:absolute;left:6px;top:543.8px;font-family:'Liberation Mono', monospace;font-size:9px;line-height:1;color:#000;white-space:nowrap;transform:scaleX(0.815);transform-origin:0 0">Command:</div>
<div style="position:absolute;left:6px;top:551.8px;font-family:'Liberation Mono', monospace;font-size:9px;line-height:1;color:#000;white-space:nowrap;transform:scaleX(0.815);transform-origin:0 0">Command: _saveas</div>
<div style="position:absolute;left:6px;top:561.6px;font-family:'Liberation Mono', monospace;font-size:9px;line-height:1;color:#000;white-space:nowrap;transform:scaleX(0.815);transform-origin:0 0">Command:</div>
<div style="position:absolute;left:785px;top:541px;width:11px;height:17.5px;background:#c0c0c0;"></div>
<div style="position:absolute;left:785px;top:543px;width:9.5px;height:7.5px;background:#c0c0c0;box-sizing:border-box;border-top:1px solid #fff;border-left:1px solid #fff;border-right:1px solid #808080;border-bottom:1px solid #808080"></div>
<div style="position:absolute;left:785px;top:550.5px;width:9.5px;height:7.5px;background:#c0c0c0;box-sizing:border-box;border-top:1px solid #fff;border-left:1px solid #fff;border-right:1px solid #808080;border-bottom:1px solid #808080"></div>
<svg style="position:absolute;left:0;top:0" width="800" height="600"><path d="M787.7 548.3H792L789.85 545.5Z" fill="#000"/><path d="M787.7 553H792L789.85 555.8Z" fill="#000"/></svg>
<div style="position:absolute;left:745px;top:559px;width:40px;height:9px;background:#e6e6e6;"></div>
<div style="position:absolute;left:745px;top:559px;width:9px;height:8.5px;background:#c0c0c0;box-sizing:border-box;border-top:1px solid #fff;border-left:1px solid #fff;border-right:1px solid #808080;border-bottom:1px solid #808080"></div>
<div style="position:absolute;left:756.5px;top:559px;width:7.5px;height:8.5px;background:#c0c0c0;box-sizing:border-box;border-top:1px solid #fff;border-left:1px solid #fff;border-right:1px solid #808080;border-bottom:1px solid #808080"></div>
<div style="position:absolute;left:776px;top:559px;width:9px;height:8.5px;background:#c0c0c0;box-sizing:border-box;border-top:1px solid #fff;border-left:1px solid #fff;border-right:1px solid #808080;border-bottom:1px solid #808080"></div>
<svg style="position:absolute;left:0;top:0" width="800" height="600"><path d="M751 561L748.2 563.25L751 565.5Z" fill="#000"/><path d="M779.5 561L782.3 563.25L779.5 565.5Z" fill="#000"/></svg>
<div style="position:absolute;left:9px;top:572px;width:138px;height:8.6px;background:#b8b8b8;box-sizing:border-box;border-top:1px solid #808080;border-left:1px solid #808080;border-right:1px solid #fff;border-bottom:1px solid #fff"></div>
<div style="position:absolute;left:10.5px;top:573.9px;font-family:'Liberation Sans', sans-serif;font-size:6.8px;line-height:1;color:#000;font-weight:normal;white-space:nowrap;-webkit-text-stroke:0.18px #000;">43'-4",</div>
<div style="position:absolute;left:39px;top:573.9px;font-family:'Liberation Sans', sans-serif;font-size:6.8px;line-height:1;color:#000;font-weight:normal;white-space:nowrap;-webkit-text-stroke:0.18px #000;">40'-0"</div>
<div style="position:absolute;left:64px;top:573.9px;font-family:'Liberation Sans', sans-serif;font-size:6.8px;line-height:1;color:#000;font-weight:normal;white-space:nowrap;-webkit-text-stroke:0.18px #000;">, 0'-0"</div>
<div style="position:absolute;left:148.2px;top:571.7px;width:20.30000000000001px;height:8.6px;box-sizing:border-box;border-top:1px solid #606060;border-left:1px solid #606060;border-right:1px solid #fff;border-bottom:1px solid #fff;background:#c0c0c0"></div>
<div style="position:absolute;left:148.2px;top:573.6px;width:20.30000000000001px;text-align:center;font-family:'Liberation Sans',sans-serif;font-size:6.5px;line-height:1;white-space:nowrap">SNAP</div>
<div style="position:absolute;left:168.5px;top:571.7px;width:19.5px;height:8.6px;box-sizing:border-box;border-top:1px solid #606060;border-left:1px solid #606060;border-right:1px solid #fff;border-bottom:1px solid #fff;background:#c0c0c0"></div>
<div style="position:absolute;left:168.5px;top:573.6px;width:19.5px;text-align:center;font-family:'Liberation Sans',sans-serif;font-size:6.5px;line-height:1;white-space:nowrap">GRID</div>
<div style="position:absolute;left:188px;top:573.6px;width:27px;text-align:center;font-family:'Liberation Sans',sans-serif;font-size:6.5px;line-height:1;white-space:nowrap">ORTHO</div>
<div style="position:absolute;left:215px;top:571.7px;width:27px;height:8.6px;box-sizing:border-box;border-top:1px solid #fff;border-left:1px solid #fff;border-right:1px solid #808080;border-bottom:1px solid #808080;background:#c0c0c0"></div>
<div style="position:absolute;left:215px;top:573.6px;width:27px;text-align:center;font-family:'Liberation Sans',sans-serif;font-size:6.5px;line-height:1;white-space:nowrap">POLAR</div>
<div style="position:absolute;left:242px;top:571.7px;width:25.69999999999999px;height:8.6px;box-sizing:border-box;border-top:1px solid #606060;border-left:1px solid #606060;border-right:1px solid #fff;border-bottom:1px solid #fff;background:#c0c0c0"></div>
<div style="position:absolute;left:242px;top:573.6px;width:25.69999999999999px;text-align:center;font-family:'Liberation Sans',sans-serif;font-size:6.5px;line-height:1;white-space:nowrap">OSNAP</div>
<div style="position:absolute;left:268px;top:571.7px;width:30.5px;height:8.6px;box-sizing:border-box;border-top:1px solid #606060;border-left:1px solid #606060;border-right:1px solid #fff;border-bottom:1px solid #fff;background:#c0c0c0"></div>
<div style="position:absolute;left:268px;top:573.6px;width:30.5px;text-align:center;font-family:'Liberation Sans',sans-serif;font-size:6.5px;line-height:1;white-space:nowrap">OTRACK</div>
<div style="position:absolute;left:298.5px;top:571.7px;width:17.19999999999999px;height:8.6px;box-sizing:border-box;border-top:1px solid #606060;border-left:1px solid #606060;border-right:1px solid #fff;border-bottom:1px solid #fff;background:#c0c0c0"></div>
<div style="position:absolute;left:298.5px;top:573.6px;width:17.19999999999999px;text-align:center;font-family:'Liberation Sans',sans-serif;font-size:6.5px;line-height:1;white-space:nowrap">LWT</div>
<div style="position:absolute;left:316px;top:571.7px;width:26px;height:8.6px;box-sizing:border-box;border-top:1px solid #606060;border-left:1px solid #606060;border-right:1px solid #fff;border-bottom:1px solid #fff;background:#c0c0c0"></div>
<div style="position:absolute;left:316px;top:573.6px;width:26px;text-align:center;font-family:'Liberation Sans',sans-serif;font-size:6.5px;line-height:1;white-space:nowrap">MODEL</div>
<div style="position:absolute;left:0px;top:582px;width:797px;height:1px;background:#404040;"></div>
<div style="position:absolute;left:0px;top:583px;width:800px;height:1px;background:#f0f0f0;"></div>
<div style="position:absolute;left:0px;top:584px;width:800px;height:16px;background:#c0c0c0;"></div>
<div style="position:absolute;left:2px;top:585.3px;width:31px;height:12.7px;background:#c0c0c0;box-sizing:border-box;border-top:1px solid #fff;border-left:1px solid #fff;border-right:1px solid #000;border-bottom:1px solid #000;box-shadow:inset -0.6px -0.6px 0 #808080"></div>
<div style="position:absolute;left:14.4px;top:589.4px;font-family:'Liberation Sans', sans-serif;font-size:7.3px;line-height:1;color:#000;font-weight:bold;white-space:nowrap;">Start</div>
<svg style="position:absolute;left:0;top:0" width="800" height="600"><g transform="translate(3.8 587.3)"><path d="M0.5 0.5H4.5V4H0.5Z" fill="#e02020"/><path d="M5 0.5H9V4H5Z" fill="#20a020"/><path d="M0.5 4.5H4.5V8.5H0.5Z" fill="#2040e0"/><path d="M5 4.5H9V8.5H5Z" fill="#e0c000"/></g></svg>
<div style="position:absolute;left:35px;top:585px;width:0.8px;height:13px;background:#fff;"></div>
<div style="position:absolute;left:35.8px;top:585px;width:0.8px;height:13px;background:#808080;"></div>
<div style="position:absolute;left:37px;top:585px;width:0.8px;height:13px;background:#fff;"></div>
<div style="position:absolute;left:37.8px;top:585px;width:0.8px;height:13px;background:#808080;"></div>
<div style="position:absolute;left:96px;top:585px;width:0.8px;height:13px;background:#808080;"></div>
<div style="position:absolute;left:96.8px;top:585px;width:0.8px;height:13px;background:#fff;"></div>
<svg style="position:absolute;left:0;top:0" width="800" height="600"><g transform="translate(45.4 590.7)"><path d="M-4.3 -4H4.3V4.3H-4.3Z" fill="#fff" stroke="#102080" stroke-width="1.1"/><path d="M-3 2.8L3.5 -3.8" stroke="#e02020" stroke-width="1.3"/><path d="M-3.2 0.5L-1 2.5" stroke="#e0c000" stroke-width="1.1"/><path d="M-3.5 3.6H3.5" stroke="#2040a0" stroke-width="0.8"/></g><g transform="translate(56.8 591)"><path d="M-2.6 0.6H3.2Q3.2 -3.2 0 -3.2Q-3.2 -3.2 -3.2 0Q-3.2 3.3 0 3.3Q2 3.3 2.8 2" fill="none" stroke="#1848d8" stroke-width="1.6"/><path d="M-4.2 2.8Q-3 -3 4.4 -3.8" fill="none" stroke="#e8c040" stroke-width="0.6"/></g><g transform="translate(68.5 591)"><path d="M-4.3 -3.5H4.3V3.8H-4.3Z" fill="#f0f0f0" stroke="#404040" stroke-width="0.6"/><path d="M-3 -3.5L0.5 1.5L-1.5 3.8H-4.3V-3.5Z" fill="#1030b0"/><path d="M1 -3.5L4.3 -1V1.5Z" fill="#30a0e0"/><path d="M2 1.5L4.3 3.8H1Z" fill="#e04040"/></g><g transform="translate(79.6 591)"><ellipse rx="2.7" ry="3.9" fill="#fff" stroke="#e01010" stroke-width="1.5"/><path d="M-3.6 2.2Q-4.4 0 -3.2 -2" stroke="#404040" stroke-width="0.6" fill="none"/></g></svg>
<div style="position:absolute;left:88px;top:586.2px;font-family:'Liberation Sans', sans-serif;font-size:10.5px;line-height:1;color:#000;font-weight:bold;white-space:nowrap;">&#187;</div>
<div style="position:absolute;left:98.8px;top:585px;width:80.6px;height:13.7px;background:#e4e4e4;box-sizing:border-box;border-top:1px solid #000;border-left:1px solid #000;border-right:1px solid #fff;border-bottom:1px solid #fff;box-shadow:inset 0.6px 0.6px 0 #808080"></div>
<div style="position:absolute;left:112.5px;top:590.0px;font-family:'Liberation Sans', sans-serif;font-size:7.1px;line-height:1;color:#000;font-weight:bold;white-space:nowrap;">AutoCAD 2000 - [...</div>
<svg style="position:absolute;left:0;top:0" width="800" height="600"><g transform="translate(97 582)"><path d="M4.8 13.6L8.2 4H11L14 13.6H11.3L10.6 11.2H8.3L7.6 13.6Z" fill="#f00000"/><path d="M8.8 9.2H10.2L9.5 6.6Z" fill="#e4e4e4"/><path d="M5.5 10.3L13.5 8.8L13 10.2L6 11Z" fill="#ffd000" opacity="0.85"/><path d="M6.5 10.3L9 9.8" stroke="#20c020" stroke-width="0.8"/></g></svg>
<div style="position:absolute;left:181.3px;top:585px;width:78.7px;height:13.7px;background:#c0c0c0;box-sizing:border-box;border-top:1px solid #fff;border-left:1px solid #fff;border-right:1px solid #000;border-bottom:1px solid #000;box-shadow:inset -0.6px -0.6px 0 #808080"></div>
<div style="position:absolute;left:194px;top:590.0px;font-family:'Liberation Sans', sans-serif;font-size:6.5px;line-height:1;color:#000;font-weight:normal;white-space:nowrap;-webkit-text-stroke:0.18px #000;">Xerox Printer Service</div>
<svg style="position:absolute;left:0;top:0" width="800" height="600"><g transform="translate(188.5 591.8)"><path d="M-4 -2H4V3H-4Z" fill="#d0d0d0" stroke="#404040" stroke-width="0.6"/><path d="M-2.5 -4H2.5V-2H-2.5Z" fill="#fff" stroke="#404040" stroke-width="0.5"/><circle cx="2.3" cy="2.5" r="2" fill="#e00000"/><path d="M-3 -0.5H1" stroke="#00a0c0" stroke-width="0.9"/></g></svg>
<div style="position:absolute;left:262.5px;top:585px;width:80.2px;height:13.7px;background:#c0c0c0;box-sizing:border-box;border-top:1px solid #fff;border-left:1px solid #fff;border-right:1px solid #000;border-bottom:1px solid #000;box-shadow:inset -0.6px -0.6px 0 #808080"></div>
<div style="position:absolute;left:275.2px;top:590.0px;font-family:'Liberation Sans', sans-serif;font-size:6.85px;line-height:1;color:#000;font-weight:normal;white-space:nowrap;-webkit-text-stroke:0.18px #000;">Adobe Photoshop</div>
<svg style="position:absolute;left:0;top:0" width="800" height="600"><g transform="translate(269.5 591.8)"><path d="M-4 -4H4V4H-4Z" fill="#202020" stroke="#a02020" stroke-width="0.8"/><path d="M-3 1Q0 -4 3 -1.5L0.5 0.5Z" fill="#fff"/></g></svg>
<div style="position:absolute;left:708px;top:585px;width:90px;height:12.7px;box-sizing:border-box;border-top:1px solid #808080;border-left:1px solid #808080;border-right:1px solid #fff;border-bottom:1px solid #fff"></div>
<div style="position:absolute;left:768px;top:590.0px;font-family:'Liberation Sans', sans-serif;font-size:6.6px;line-height:1;color:#000;font-weight:normal;white-space:nowrap;-webkit-text-stroke:0.18px #000;">3:12 PM</div>
<svg style="position:absolute;left:0;top:0" width="800" height="600"><g transform="translate(714.5 591.5)"><path d="M-4 -4H3V3H-4Z" fill="#2040c0"/><path d="M-3 3L3 -3" stroke="#e02020" stroke-width="1.2"/><path d="M0 0L3 3" stroke="#e0c000" stroke-width="1"/><path d="M-4 -4H4" stroke="#20a020" stroke-width="1"/></g><g transform="translate(723.5 591.5)"><path d="M-3.5 -1.5H-1.5L2 -4.5V4.5L-1.5 1.5H-3.5Z" fill="#e8e000" stroke="#202020" stroke-width="0.6"/></g><g transform="translate(735.5 591.5)"><ellipse rx="3.3" ry="4.5" transform="rotate(-35)" fill="#fff" stroke="#303030" stroke-width="0.7"/></g><g transform="translate(746.5 591.5)"><path d="M-4.5 -4.5H4.5V4.5H-4.5Z" fill="#1030b0"/><circle r="3" fill="none" stroke="#fff" stroke-width="0.9"/></g><g transform="translate(757.3 591.5)"><path d="M-4 -1H4V3.5H-4Z" fill="#b0b0b0" stroke="#404040" stroke-width="0.6"/><path d="M-2 -4H3V-1H-2Z" fill="#fff" stroke="#606060" stroke-width="0.5"/><circle cx="-1.5" cy="0.8" r="0.9" fill="#00a000"/></g></svg>
<div style="position:absolute;left:37px;top:41px;width:88px;height:10px;background:#fff;box-sizing:border-box;border-top:1px solid #101010;border-left:1px solid #101010;box-shadow:0.8px 0.8px 0 #fff"></div>
<div style="position:absolute;left:116px;top:42.5px;width:9px;height:8.5px;background:#c0c0c0;box-sizing:border-box;border-top:1px solid #fff;border-left:1px solid #fff;border-right:1.2px solid #000;border-bottom:1.2px solid #000"></div>
<div style="position:absolute;left:130px;top:41px;width:49px;height:10px;background:#fff;box-sizing:border-box;border-top:1px solid #101010;border-left:1px solid #101010;box-shadow:0.8px 0.8px 0 #fff"></div>
<div style="position:absolute;left:170px;top:42.5px;width:9px;height:8.5px;background:#c0c0c0;box-sizing:border-box;border-top:1px solid #fff;border-left:1px solid #fff;border-right:1.2px solid #000;border-bottom:1.2px solid #000"></div>
<div style="position:absolute;left:183px;top:41px;width:81px;height:10px;background:#fff;box-sizing:border-box;border-top:1px solid #101010;border-left:1px solid #101010;box-shadow:0.8px 0.8px 0 #fff"></div>
<div style="position:absolute;left:255px;top:42.5px;width:9px;height:8.5px;background:#c0c0c0;box-sizing:border-box;border-top:1px solid #fff;border-left:1px solid #fff;border-right:1.2px solid #000;border-bottom:1.2px solid #000"></div>
<div style="position:absolute;left:268px;top:41px;width:65px;height:10px;background:#fff;box-sizing:border-box;border-top:1px solid #101010;border-left:1px solid #101010;box-shadow:0.8px 0.8px 0 #fff"></div>
<div style="position:absolute;left:324px;top:42.5px;width:9px;height:8.5px;background:#c0c0c0;box-sizing:border-box;border-top:1px solid #fff;border-left:1px solid #fff;border-right:1.2px solid #000;border-bottom:1.2px solid #000"></div>
<div style="position:absolute;left:336.6px;top:41px;width:60.69999999999999px;height:10px;background:#c0c0c0;box-sizing:border-box;border-top:1px solid #101010;border-left:1px solid #101010;box-shadow:0.8px 0.8px 0 #fff"></div>
<div style="position:absolute;left:388.3px;top:42.5px;width:9px;height:8.5px;background:#c0c0c0;box-sizing:border-box;border-top:1px solid #fff;border-left:1px solid #fff;border-right:1.2px solid #000;border-bottom:1.2px solid #000"></div>
<div style="position:absolute;left:72px;top:44px;width:4.5px;height:4.5px;background:#f00;outline:0.4px solid #600"></div>
<div style="position:absolute;left:79px;top:43.1px;font-family:'Liberation Sans', sans-serif;font-size:7.0px;line-height:1;color:#000;font-weight:normal;white-space:nowrap;-webkit-text-stroke:0.18px #000;">deck</div>
<div style="position:absolute;left:133px;top:44px;width:4.5px;height:4.5px;background:#f00;outline:0.4px solid #600"></div>
<div style="position:absolute;left:140px;top:43.1px;font-family:'Liberation Sans', sans-serif;font-size:7.0px;line-height:1;color:#000;font-weight:normal;white-space:nowrap;-webkit-text-stroke:0.18px #000;">ByLayer</div>
<div style="position:absolute;left:185.6px;top:46.9px;width:30px;height:0.8px;background:#000;"></div>
<div style="position:absolute;left:217.5px;top:43.1px;font-family:'Liberation Sans', sans-serif;font-size:7.0px;line-height:1;color:#000;font-weight:normal;white-space:nowrap;-webkit-text-stroke:0.18px #000;">ByLayer</div>
<div style="position:absolute;left:270px;top:46.3px;width:18.8px;height:1.5px;background:#000;"></div>
<div style="position:absolute;left:290.6px;top:43.1px;font-family:'Liberation Sans', sans-serif;font-size:7.0px;line-height:1;color:#000;font-weight:normal;white-space:nowrap;-webkit-text-stroke:0.18px #000;">ByLayer</div>
<div style="position:absolute;left:341px;top:43.1px;font-family:'Liberation Sans', sans-serif;font-size:7.0px;line-height:1;color:#909090;font-weight:normal;white-space:nowrap;-webkit-text-stroke:0.18px #909090;">ByColor</div>
<div style="position:absolute;left:764.4px;top:3.7px;width:9.399999999999977px;height:9.3px;background:#c0c0c0;box-sizing:border-box;border-top:1px solid #fff;border-left:1px solid #fff;border-right:1px solid #000;border-bottom:1px solid #000;box-shadow:inset -0.5px -0.5px 0 #808080"></div>
<div style="position:absolute;left:774px;top:3.7px;width:9.799999999999955px;height:9.3px;background:#c0c0c0;box-sizing:border-box;border-top:1px solid #fff;border-left:1px solid #fff;border-right:1px solid #000;border-bottom:1px solid #000;box-shadow:inset -0.5px -0.5px 0 #808080"></div>
<div style="position:absolute;left:785.6px;top:3.7px;width:9.399999999999977px;height:9.3px;background:#c0c0c0;box-sizing:border-box;border-top:1px solid #fff;border-left:1px solid #fff;border-right:1px solid #000;border-bottom:1px solid #000;box-shadow:inset -0.5px -0.5px 0 #808080"></div>
<div style="position:absolute;left:770px;top:16.2px;width:8.799999999999955px;height:6.600000000000001px;background:#c0c0c0;box-sizing:border-box;border-top:1px solid #fff;border-left:1px solid #fff;border-right:1px solid #000;border-bottom:1px solid #000;box-shadow:inset -0.5px -0.5px 0 #808080"></div>
<div style="position:absolute;left:778.8px;top:16.2px;width:8.200000000000045px;height:6.600000000000001px;background:#c0c0c0;box-sizing:border-box;border-top:1px solid #fff;border-left:1px solid #fff;border-right:1px solid #000;border-bottom:1px solid #000;box-shadow:inset -0.5px -0.5px 0 #808080"></div>
<div style="position:absolute;left:787.5px;top:16.2px;width:8.100000000000023px;height:6.600000000000001px;background:#c0c0c0;box-sizing:border-box;border-top:1px solid #fff;border-left:1px solid #fff;border-right:1px solid #000;border-bottom:1px solid #000;box-shadow:inset -0.5px -0.5px 0 #808080"></div>
<svg style="position:absolute;left:0;top:0" width="800" height="600" viewBox="0 0 800 600"><rect x="5" y="25.5" width="1" height="11" fill="#fff"/><rect x="6" y="25.5" width="0.8" height="11" fill="#808080"/><rect x="7" y="25.5" width="1" height="11" fill="#fff"/><rect x="8" y="25.5" width="0.8" height="11" fill="#808080"/><rect x="5" y="40" width="1" height="11" fill="#fff"/><rect x="6" y="40" width="0.8" height="11" fill="#808080"/><rect x="7" y="40" width="1" height="11" fill="#fff"/><rect x="8" y="40" width="0.8" height="11" fill="#808080"/><rect x="4" y="54.5" width="12" height="0.8" fill="#fff"/><rect x="4" y="55.3" width="12" height="0.8" fill="#808080"/><rect x="4" y="56.5" width="12" height="0.8" fill="#fff"/><rect x="4" y="57.3" width="12" height="0.8" fill="#808080"/><rect x="18" y="54.5" width="12" height="0.8" fill="#fff"/><rect x="18" y="55.3" width="12" height="0.8" fill="#808080"/><rect x="18" y="56.5" width="12" height="0.8" fill="#fff"/><rect x="18" y="57.3" width="12" height="0.8" fill="#808080"/><rect x="48.0" y="26" width="0.8" height="10" fill="#808080"/><rect x="48.8" y="26" width="0.8" height="10" fill="#fff"/><rect x="87.0" y="26" width="0.8" height="10" fill="#808080"/><rect x="87.8" y="26" width="0.8" height="10" fill="#fff"/><rect x="137.5" y="26" width="0.8" height="10" fill="#808080"/><rect x="138.3" y="26" width="0.8" height="10" fill="#fff"/><rect x="163.5" y="26" width="0.8" height="10" fill="#808080"/><rect x="164.3" y="26" width="0.8" height="10" fill="#fff"/><rect x="179.2" y="26" width="0.8" height="10" fill="#808080"/><rect x="180.0" y="26" width="0.8" height="10" fill="#fff"/><rect x="218.5" y="26" width="0.8" height="10" fill="#808080"/><rect x="219.3" y="26" width="0.8" height="10" fill="#fff"/><rect x="233.2" y="26" width="0.8" height="10" fill="#808080"/><rect x="234.0" y="26" width="0.8" height="10" fill="#fff"/><rect x="260.5" y="26" width="0.8" height="10" fill="#808080"/><rect x="261.3" y="26" width="0.8" height="10" fill="#fff"/><rect x="323.5" y="26" width="0.8" height="10" fill="#808080"/><rect x="324.3" y="26" width="0.8" height="10" fill="#fff"/><rect x="362.5" y="26" width="0.8" height="10" fill="#808080"/><rect x="363.3" y="26" width="0.8" height="10" fill="#fff"/><g transform="translate(16.25 31.2) scale(1.0)"><path d="M-3 -3.5H1L3 -1.5V3.5H-3Z" fill="#fff" stroke="#000" stroke-width="0.9" /><path d="M1 -3.5V-1.5H3" fill="none" stroke="#000" stroke-width="0.6" /></g><g transform="translate(28 31.2) scale(1.0)"><path d="M-4 -1H-1L0 0H3L4 3.5H-3.5Z" fill="#e0c000" stroke="#000" stroke-width="0.8" /><path d="M0 -2Q1.5 -4.5 3.5 -3" fill="none" stroke="#000" stroke-width="0.8" /><path d="M3 -4.5L4.2 -2.8L2.3 -2.5Z" fill="#000" stroke="#000" stroke-width="0.3" /></g><g transform="translate(39.75 31.2) scale(1.0)"><path d="M-3.8 -3.8H3.8V3.8H-3.8Z" fill="#000" stroke="#000" stroke-width="0.5" /><path d="M-2.5 -3.6H2.5V-0.5H-2.5Z" fill="#c0c0c0" stroke="none" stroke-width="0.9" /><path d="M-1.5 1.5H1.8V3.6H-1.5Z" fill="#e0e000" stroke="none" stroke-width="0.9" /></g><g transform="translate(54.75 31.2) scale(1.0)"><path d="M-4 -0.5H4V3H-4Z" fill="#a0a0a0" stroke="#000" stroke-width="0.8" /><path d="M-2.5 -3.5H2.5V-0.5H-2.5Z" fill="#fff" stroke="#000" stroke-width="0.6" /><path d="M-3 1H3V2H-3Z" fill="#e0e000" stroke="none" stroke-width="0.9" /></g><g transform="translate(66.75 31.2) scale(1.0)"><path d="M-3.5 -3.5H1L2 -2.5V3.5H-3.5Z" fill="#fff" stroke="#000" stroke-width="0.8" /><circle cx="1" cy="1" r="1.8" fill="#00c0e0" stroke="#000" stroke-width="0.7"/><line x1="2.2" y1="2.2" x2="4" y2="4" stroke="#000" stroke-width="1.2"/></g><g transform="translate(79 31.2) scale(1.0)"><circle cx="-0.8" cy="-0.8" r="2.8" fill="#e0e0e0" stroke="#000" stroke-width="0.9"/><circle cx="-0.6" cy="-0.6" r="1.1" fill="#b80000"/><line x1="1.2" y1="1.2" x2="3.8" y2="3.8" stroke="#000" stroke-width="1.4"/><circle cx="3" cy="-1.5" r="0.6" fill="#b80000"/></g><g transform="translate(93.75 31.2) scale(1.0)"><path d="M-1.5 -4L0.5 0.5M1.5 -4L-0.5 0.5" fill="none" stroke="#000" stroke-width="0.8" /><circle cx="-1.8" cy="2.5" r="1.3" fill="none" stroke="#0000c0" stroke-width="0.9"/><circle cx="1.8" cy="2.5" r="1.3" fill="none" stroke="#0000c0" stroke-width="0.9"/></g><g transform="translate(105.75 31.2) scale(1.0)"><path d="M-4 -4H0V1H-4Z" fill="#d0d0d0" stroke="#000" stroke-width="0.7" /><path d="M-0.5 -1H3.5V4H-0.5Z" fill="#fff" stroke="#0000c0" stroke-width="0.8" /></g><g transform="translate(118 31.2) scale(1.0)"><path d="M-4 -3H2V3.5H-4Z" fill="#a08000" stroke="#000" stroke-width="0.8" /><path d="M-2.5 -4H0.5V-2.5H-2.5Z" fill="#c0c0c0" stroke="#000" stroke-width="0.5" /><path d="M0 -0.5H4V4H0Z" fill="#fff" stroke="#0000c0" stroke-width="0.8" /></g><g transform="translate(129.75 31.2) scale(1.0)"><path d="M-2.5 0L2 -3.8L3.5 -2.5L-1 1.5Z" fill="#000" stroke="#000" stroke-width="0.5" /><circle cx="2.6" cy="-3.5" r="1.1" fill="#b80000"/><path d="M-4 2.5H-1.5V4.2H-4Z" fill="#ff0000" stroke="none" stroke-width="0.9" /><path d="M-1.5 2.5H1V4.2H-1.5Z" fill="#ffd000" stroke="none" stroke-width="0.9" /><path d="M1 2.5H3.5V4.2H1Z" fill="#0000ff" stroke="none" stroke-width="0.9" /></g><g transform="translate(144.75 31.2) scale(1.0)"><path d="M-2.8 0.5Q-3 -2.5 0 -2.5Q3 -2.5 3 0.5" fill="none" stroke="#0000c0" stroke-width="1.1" /><path d="M-4.5 -0.5L-2.8 2L-1 -0.5Z" fill="#0000c0" stroke="none" stroke-width="0.9" /></g><g transform="translate(156.75 31.2) scale(1.0)"><path d="M-3 0.5Q-3 -2.5 0 -2.5Q3 -2.5 2.8 0.5" fill="none" stroke="#0000c0" stroke-width="1.1" /><path d="M1 -0.5L2.8 2L4.5 -0.5Z" fill="#0000c0" stroke="none" stroke-width="0.9" /></g><g transform="translate(172 31.2) scale(1.0)"><circle cx="-0.5" cy="-0.5" r="3.5" fill="#0040c0" stroke="#000" stroke-width="0.5"/><path d="M-3 -1Q-1 -3 0 -1Q1 1 -2 2Z" fill="#00a000" stroke="none" stroke-width="0.9" /><path d="M0 2.5H4V4H0Z" fill="#606060" stroke="none" stroke-width="0.9" /></g><g transform="translate(187 31.2) scale(1.0)"><line x1="-4" y1="-0.5" x2="2" y2="-0.5" stroke="#000" stroke-width="0.9"/><circle cx="2.5" cy="-1" r="1.2" fill="#b80000"/><line x1="2.5" y1="1" x2="2" y2="3.8" stroke="#000" stroke-width="1.2"/></g><g transform="translate(199 31.2) scale(1.0)"><path d="M-3.5 3.5L-3.5 -1L-1 -3.5H1L3 -1" fill="none" stroke="#000" stroke-width="0.9" /><circle cx="1" cy="2" r="1.6" fill="#fff" stroke="#000" stroke-width="0.8"/><line x1="2.3" y1="3.3" x2="4" y2="4.2" stroke="#000" stroke-width="1"/></g><g transform="translate(211 31.2) scale(1.0)"><path d="M-4 -1.5H4V2.5H-4Z" fill="#a0a0a0" stroke="#000" stroke-width="0.8" /><path d="M-3.5 0H3.5V1.5H-3.5Z" fill="#c0c000" stroke="none" stroke-width="0.9" /><path d="M-2.5 -3.5H2.5V-1.5H-2.5Z" fill="#fff" stroke="#000" stroke-width="0.5" /></g><g transform="translate(227 31.2) scale(1.0)"><path d="M-2.5 -3L3 3.5" fill="none" stroke="#000" stroke-width="1.3" /><circle cx="-1" cy="-3" r="1.1" fill="#e8e800"/><path d="M-3.5 1.5H-0.5V4.2H-3.5Z" fill="#fff" stroke="none" stroke-width="0.9" /></g><g transform="translate(240.75 31.2) scale(1.0)"><path d="M-4 -3.5H4V3.5H-4Z" fill="#909090" stroke="#000" stroke-width="0.6" /><path d="M-4 0H4M0 -3.5V3.5" fill="none" stroke="#404040" stroke-width="0.6" /><circle cx="-2" cy="-1.8" r="1.1" fill="#00d0e0"/><circle cx="1.5" cy="-1.2" r="1.1" fill="#00d0e0"/><circle cx="-2" cy="1.8" r="1.0" fill="#00d0e0"/><path d="M0.5 1H4.2V4.2H0.5Z" fill="#fff" stroke="#000" stroke-width="0.8" /></g><g transform="translate(253.25 31.2) scale(1.0)"><path d="M-3.5 -1.5Q-3.5 -3.5 0 -3.5Q3.5 -3.5 3.5 0Q3.5 3.5 0 3.5Q-3.5 3.5 -3.5 1.5" fill="none" stroke="#000" stroke-width="1.6" /><path d="M-1 -1H1.5V1.5H-1Z" fill="#fff" stroke="none" stroke-width="0.9" /><circle cx="2.5" cy="3.5" r="0.7" fill="#b80000"/></g><g transform="translate(268 31.2) scale(1.0)"><path d="M-4 0Q-1 -3.5 3 -1L3.5 1Q0 3 -4 0Z" fill="#208000" stroke="#000" stroke-width="0.6" /><circle cx="2.5" cy="2" r="0.9" fill="#e0e000"/></g><g transform="translate(279.75 31.2) scale(1.0)"><circle cx="-1" cy="0" r="2.5" fill="none" stroke="#000" stroke-width="1"/><line x1="0.8" y1="1.8" x2="3" y2="4" stroke="#000" stroke-width="1.2"/><path d="M2 -4L4 -2.5L2.5 -1.5Z" fill="#000" stroke="none" stroke-width="0.9" /><path d="M-4 3L-2 1" fill="none" stroke="#000" stroke-width="0.8" /></g><g transform="translate(291.5 31.2) scale(1.0)"><circle cx="-1" cy="-0.5" r="2.6" fill="none" stroke="#000" stroke-width="1"/><line x1="0.8" y1="1.3" x2="3" y2="3.8" stroke="#000" stroke-width="1.2"/><path d="M2 -4H4M2 -2H4" fill="none" stroke="#000" stroke-width="0.7" /></g><g transform="translate(304 31.2) scale(1.0)"><circle cx="-0.5" cy="-0.5" r="3" fill="#fff" stroke="#000" stroke-width="1"/><circle cx="-1.2" cy="0.2" r="0.8" fill="#b80000"/><circle cx="0.8" cy="-1.4" r="0.8" fill="#b80000"/><line x1="1.6" y1="1.6" x2="3.8" y2="3.8" stroke="#000" stroke-width="1.2"/></g><g transform="translate(315.5 31.2) scale(1.0)"><circle cx="-0.5" cy="-0.5" r="3" fill="#fff" stroke="#000" stroke-width="1.1"/><path d="M-1.5 -1.5H0.5V0.5" fill="none" stroke="#000" stroke-width="0.7" /><line x1="1.6" y1="1.6" x2="3.8" y2="3.8" stroke="#000" stroke-width="1.2"/></g><g transform="translate(330.8 31.2) scale(1.0)"><path d="M-3.5 -3.5H2V3.5H-3.5Z" fill="#fff" stroke="#000" stroke-width="0.8" /><path d="M-2.5 -2H1V-1H-2.5Z" fill="#00a0a0" stroke="none" stroke-width="0.9" /><path d="M-2.5 0H1V1H-2.5Z" fill="#e04040" stroke="none" stroke-width="0.9" /><line x1="2.5" y1="-3" x2="4" y2="3.5" stroke="#0000c0" stroke-width="0.9"/></g><g transform="translate(343 31.2) scale(1.0)"><path d="M-4 -4H-2V-2H-4Z" fill="#ff0000" stroke="none" stroke-width="0.9" /><path d="M-2 -4H0V-2H-2Z" fill="#00c000" stroke="none" stroke-width="0.9" /><path d="M0 -4H2V-2H0Z" fill="#0000ff" stroke="none" stroke-width="0.9" /><path d="M-3 4L0 -0.5L4 -3" fill="none" stroke="#000" stroke-width="1.1" /><path d="M-3.5 1H0V3H-3.5Z" fill="#000" stroke="none" stroke-width="0.9" /></g><g transform="translate(355 31.2) scale(1.0)"><ellipse cx="0" cy="0" rx="3" ry="3.5" fill="#00a0d0" stroke="#505050" stroke-width="0.7"/><path d="M-1 -2H1V2H-1Z" fill="#a0f0ff" stroke="none" stroke-width="0.9" /></g><g transform="translate(369.7 31.2) scale(1.0)"><text x="0" y="3.5" text-anchor="middle" font-family="Liberation Sans" font-weight="bold" font-size="9.5" fill="#a00000">?</text></g><g transform="translate(9.6 64.2) scale(1.0)"><line x1="-3.3" y1="3" x2="3.3" y2="-3" stroke="#000" stroke-width="0.9"/><circle cx="-3.3" cy="3" r="0.75" fill="#b80000"/><circle cx="3.3" cy="-3" r="0.75" fill="#b80000"/></g><g transform="translate(23.5 64.2) scale(1.0)"><path d="M-2.5 1.5L2.5 -3.5L4 -2L-1 3Z" fill="#ffff00" stroke="#000" stroke-width="0.6" /><path d="M-2.5 1.5L-1 0L0.5 1.5L-1 3Z" fill="#e000e0" stroke="none" stroke-width="0.9" /><circle cx="-3.5" cy="4" r="0.8" fill="#000"/><circle cx="3.5" cy="4" r="0.8" fill="#000"/></g><g transform="translate(9.6 75.7) scale(1.0)"><line x1="-4" y1="3.6" x2="4" y2="-3.6" stroke="#000" stroke-width="1.1"/><circle cx="-1.2" cy="1.1" r="0.75" fill="#b80000"/><circle cx="1.5" cy="-1.3" r="0.75" fill="#b80000"/></g><g transform="translate(23.5 75.7) scale(1.0)"><circle cx="-2.3" cy="-2" r="1.8" fill="#fff" stroke="#000" stroke-width="0.8"/><circle cx="0.8" cy="-2" r="1.2" fill="#000"/><circle cx="0.5" cy="2.5" r="1.2" fill="#000"/><circle cx="2.5" cy="2.3" r="1.8" fill="#fff" stroke="#000" stroke-width="0.8"/></g><g transform="translate(9.6 87.2) scale(1.0)"><path d="M-4 2.5L2 -3.5L4 -1.5L-2 4.5Z" fill="#fff" stroke="#000" stroke-width="0.8" /><circle cx="-3.5" cy="3" r="0.8" fill="#b80000"/><circle cx="3.5" cy="-3" r="0.8" fill="#b80000"/></g><g transform="translate(23.5 87.2) scale(1.0)"><path d="M-0.8 -4L-4 3.5H-0.8Z" fill="#fff" stroke="#000" stroke-width="0.8" /><path d="M0.8 -4L4 3.5H0.8Z" fill="#fff" stroke="#000" stroke-width="0.8" /><line x1="0" y1="-4.5" x2="0" y2="4" stroke="#b80000" stroke-width="0.8"/></g><g transform="translate(9.6 98.7) scale(1.0)"><path d="M-4 2.5H2Q4 2.5 3.5 0Q3 -2 0 -2" fill="none" stroke="#000" stroke-width="0.9" /><circle cx="-3.8" cy="2.5" r="0.8" fill="#b80000"/><circle cx="0" cy="-2" r="0.8" fill="#b80000"/><circle cx="2.5" cy="2.5" r="0.8" fill="#b80000"/></g><g transform="translate(23.5 98.7) scale(1.0)"><path d="M-4.5 2.5Q-4 -4 0 -4Q4 -4 4.5 2.5Z" fill="#c04040" stroke="#000" stroke-width="0.9" /><path d="M-2 1Q-2 -2 0 -2Q2 -2 2 1Z" fill="#fff" stroke="none" stroke-width="0.9" /></g><g transform="translate(9.6 110.2) scale(1.0)"><path d="M-3.5 2.5L-2.5 -1L0 -3L2.5 -1L3.5 2.5Z" fill="#fff" stroke="#000" stroke-width="0.9" /></g><g transform="translate(23.5 110.2) scale(1.0)"><circle cx="-3" cy="-3" r="1.1" fill="#fff" stroke="#000" stroke-width="0.7"/><circle cx="-3" cy="0" r="1.1" fill="#fff" stroke="#000" stroke-width="0.7"/><circle cx="-3" cy="3" r="1.1" fill="#fff" stroke="#000" stroke-width="0.7"/><circle cx="0" cy="-3" r="1.1" fill="#fff" stroke="#000" stroke-width="0.7"/><circle cx="0" cy="0" r="1.1" fill="#fff" stroke="#000" stroke-width="0.7"/><circle cx="0" cy="3" r="1.1" fill="#fff" stroke="#000" stroke-width="0.7"/><circle cx="3" cy="-3" r="1.1" fill="#fff" stroke="#000" stroke-width="0.7"/><circle cx="3" cy="0" r="1.1" fill="#fff" stroke="#000" stroke-width="0.7"/><circle cx="3" cy="3" r="1.1" fill="#fff" stroke="#000" stroke-width="0.7"/></g><g transform="translate(9.6 121.7) scale(1.0)"><path d="M-4 -2.5H4V2.5H-4Z" fill="#fff" stroke="#000" stroke-width="1.0" /><circle cx="-4" cy="2.5" r="0.8" fill="#b80000"/><circle cx="4" cy="-2.5" r="0.8" fill="#b80000"/></g><g transform="translate(23.5 121.7) scale(1.0)"><path d="M0 -4.5V4.5M-4.5 0H4.5" fill="none" stroke="#000" stroke-width="1.1" /><path d="M0 -4.5L-1.5 -2.5H1.5ZM0 4.5L-1.5 2.5H1.5ZM-4.5 0L-2.5 -1.5V1.5ZM4.5 0L2.5 -1.5V1.5Z" fill="#000" stroke="none" stroke-width="0.9" /></g><g transform="translate(9.6 133.2) scale(1.0)"><path d="M-3.5 3Q-3 -2.5 3.5 -3" fill="none" stroke="#000" stroke-width="1.0" /><circle cx="-3.5" cy="3.2" r="1.0" fill="#b80000"/><circle cx="3.5" cy="-3" r="0.8" fill="#b80000"/></g><g transform="translate(23.5 133.2) scale(1.0)"><circle r="3.2" fill="none" stroke="#000" stroke-width="1.3"/><line x1="0" y1="0" x2="0" y2="-3" stroke="#000" stroke-width="1"/><path d="M1 -4.5L3 -3L1 -2Z" fill="#b80000" stroke="none" stroke-width="0.9" /></g><g transform="translate(9.6 144.7) scale(1.0)"><circle r="3.8" fill="#fff" stroke="#000" stroke-width="0.9"/><line x1="0" y1="0" x2="2" y2="-1.5" stroke="#b80000" stroke-width="0.8"/><circle cx="0" cy="0" r="0.6" fill="#b80000"/></g><g transform="translate(23.5 144.7) scale(1.0)"><path d="M-3.5 -3.5H3.5V3.5H-3.5Z" fill="#fff" stroke="#b80000" stroke-width="1.0" /><path d="M-3.5 0H0V3.5H-3.5Z" fill="#fff" stroke="#000" stroke-width="0.7" /></g><g transform="translate(9.6 156.2) scale(1.0)"><path d="M-4 1.5Q-2.5 -2.5 -0.5 0Q1.5 2.5 4 -2" fill="none" stroke="#000" stroke-width="0.9" /></g><g transform="translate(23.5 156.2) scale(1.0)"><path d="M-3.5 -3.5H0L3.5 3.5H-3.5Z" fill="#fff" stroke="#000" stroke-width="0.9" /><path d="M0 -3.5L3.5 3.5H0Z" fill="#fff" stroke="#b80000" stroke-width="0.7" /></g><g transform="translate(9.6 167.7) scale(1.0)"><ellipse rx="4.3" ry="2.6" fill="#fff" stroke="#000" stroke-width="0.9"/><path d="M-2 -1.2Q0 -3 2 -1.2" fill="none" stroke="#b80000" stroke-width="0.8" /><circle cx="-4" cy="0" r="0.7" fill="#b80000"/><circle cx="4" cy="0" r="0.7" fill="#b80000"/></g><g transform="translate(23.5 167.7) scale(1.0)"><line x1="-4" y1="4" x2="4" y2="-3.5" stroke="#000" stroke-width="1"/><line x1="-2.5" y1="2.5" x2="2.5" y2="-2" stroke="#b80000" stroke-width="0.8"/><circle cx="3.5" cy="-3.5" r="0.7" fill="#000"/></g><g transform="translate(9.6 179.2) scale(1.0)"><circle cx="0.5" cy="-0.5" r="3.3" fill="none" stroke="#000" stroke-width="0.8"/><path d="M-3.5 -1H0V2H-3.5Z" fill="#ffff00" stroke="#000" stroke-width="0.5" /><path d="M0 1H3.5V4H0Z" fill="#ffff00" stroke="#000" stroke-width="0.5" /></g><g transform="translate(23.5 179.2) scale(1.0)"><line x1="-3.5" y1="3.5" x2="2.5" y2="-4" stroke="#000" stroke-width="1"/><line x1="-4" y1="0" x2="4" y2="0" stroke="#000" stroke-width="0.9"/><line x1="1" y1="0" x2="4" y2="0" stroke="#b80000" stroke-width="1"/></g><g transform="translate(9.6 190.7) scale(1.0)"><path d="M-3.5 -3H0V0H-3.5Z" fill="#ffff00" stroke="#000" stroke-width="0.6" /><path d="M0 0H3.5V3H0Z" fill="#ffff00" stroke="#000" stroke-width="0.6" /></g><g transform="translate(23.5 190.7) scale(1.0)"><line x1="-4" y1="0" x2="0" y2="0" stroke="#000" stroke-width="1.5"/><line x1="0" y1="0" x2="2" y2="0" stroke="#b80000" stroke-width="1.2"/><line x1="4" y1="-4" x2="0.5" y2="3.5" stroke="#000" stroke-width="1.1"/></g><g transform="translate(9.6 202.2) scale(1.0)"><circle cx="-0.5" cy="0" r="0.9" fill="#b80000"/></g><g transform="translate(23.5 202.2) scale(1.0)"><path d="M-4 -3V1.5Q-4 3 -2.5 3H2.5Q4 3 4 1.5V-3" fill="none" stroke="#000" stroke-width="1.1" /><path d="M-2.5 -2H2.5" fill="none" stroke="#b80000" stroke-width="1.2" /></g><g transform="translate(9.6 213.7) scale(1.0)"><path d="M-3 -3.5H3V3.5H-3Z" fill="#c02020" stroke="#000" stroke-width="0.8" /><path d="M-1.5 -2.5L1.5 2.5M1.5 -2.5L-1.5 2.5" fill="none" stroke="#fff" stroke-width="0.5" /><circle cx="-4" cy="-3.5" r="0.6" fill="#000"/><circle cx="4" cy="-3.5" r="0.6" fill="#000"/><circle cx="-4" cy="3.5" r="0.6" fill="#000"/><circle cx="4" cy="3.5" r="0.6" fill="#000"/></g><g transform="translate(23.5 213.7) scale(1.0)"><path d="M-3 4V1Q-3 -3 3 -3" fill="none" stroke="#000" stroke-width="1.1" /><line x1="2" y1="-3" x2="4" y2="-3" stroke="#000" stroke-width="1"/></g><g transform="translate(9.6 225.2) scale(1.0)"><ellipse rx="3.8" ry="3.2" fill="#d0d0d0" stroke="#000" stroke-width="0.9"/><path d="M-1.5 1Q-2 -1.5 0.5 -1Q2 0 0.5 1" fill="none" stroke="#000" stroke-width="0.9" /></g><g transform="translate(23.5 225.2) scale(1.0)"><path d="M-3 4V1Q-3 -3 3 -3" fill="none" stroke="#000" stroke-width="1.1" /><line x1="2" y1="-3" x2="4" y2="-3" stroke="#000" stroke-width="1"/></g><g transform="translate(9.6 236.7) scale(1.0)"><text x="0" y="4" text-anchor="middle" font-family="Liberation Sans" font-weight="bold" font-size="11" fill="#000">A</text></g><g transform="translate(23.5 236.7) scale(1.0)"><path d="M-4 3L2 -2L3.5 -0.5L-2.5 4.5Z" fill="#e00000" stroke="#000" stroke-width="0.8" /><path d="M2 -3L4 -4.5M3 -2L4.5 -3" fill="none" stroke="#ff4040" stroke-width="0.6" /></g><g transform="translate(16 46.5) scale(1.0)"><path d="M-3.5 -3H3.5V-1H-3.5Z" fill="#fff" stroke="#000" stroke-width="0.6" /><path d="M-4 -0.5H4V1.5H-4Z" fill="#d0d000" stroke="#000" stroke-width="0.6" /><path d="M-3.5 2H3.5V3.5H-3.5Z" fill="#8080ff" stroke="#000" stroke-width="0.6" /></g><g transform="translate(28 46.5) scale(1.0)"><path d="M-3.5 -3H3H3.5V3H-3.5Z" fill="#d8d8d8" stroke="#303030" stroke-width="0.8" /><path d="M-2 -1.5H3.5V3H-2Z" fill="#b0b0b0" stroke="#303030" stroke-width="0.7" /></g><path d="M118.6 46H122.2L120.4 47.7Z" fill="#000"/><path d="M172.6 46H176.2L174.4 47.7Z" fill="#000"/><path d="M257.6 46H261.2L259.4 47.7Z" fill="#000"/><path d="M326.6 46H330.2L328.4 47.7Z" fill="#000"/><path d="M390.90000000000003 46H394.5L392.7 47.7Z" fill="#000"/><path d="M391.1 46H394.7L392.9 47.7Z" fill="#808080"/><g transform="translate(42.5 45.5) scale(1.0)"><path d="M0 -3.3C-2.2 -3.3 -2.4 -0.6 -1.2 0.8V2.5H1.2V0.8C2.4 -0.6 2.2 -3.3 0 -3.3Z" fill="#ffff00" stroke="#000" stroke-width="0.6" /><path d="M-0.8 3H0.8" fill="none" stroke="#000" stroke-width="0.8" /></g><g transform="translate(50 45.5) scale(1.0)"><path d="M-2.5 -2.5H2.5V2.5H-2.5Z" fill="#ffff00" stroke="none" stroke-width="0.9" /><circle r="1.6" fill="none" stroke="#000" stroke-width="0.7"/></g><g transform="translate(58.5 45.5) scale(1.0)"><path d="M-3 -0.5H1V3.5H-3Z" fill="#202020" stroke="none" stroke-width="0.9" /><path d="M-1 -0.5V-2Q-1 -3.8 1 -3.8Q3 -3.8 3 -2V-1" fill="none" stroke="#000" stroke-width="0.8" /><path d="M-2 1H0" fill="none" stroke="#e0e000" stroke-width="0.8" /></g><g transform="translate(67 45.5) scale(1.0)"><path d="M-3.5 -0.5H3.5V3H-3.5Z" fill="#e0e0e0" stroke="#000" stroke-width="0.7" /><path d="M-2 -3.5H2V-0.5H-2Z" fill="#fff" stroke="#000" stroke-width="0.6" /><path d="M-3 0.5H3" fill="none" stroke="#40c0ff" stroke-width="0.8" /></g><rect x="34.0" y="40.5" width="0.8" height="10.5" fill="#808080"/><rect x="34.8" y="40.5" width="0.8" height="10.5" fill="#fff"/><rect x="127.0" y="40.5" width="0.8" height="10.5" fill="#808080"/><rect x="127.8" y="40.5" width="0.8" height="10.5" fill="#fff"/><rect x="180.5" y="40.5" width="0.8" height="10.5" fill="#808080"/><rect x="181.3" y="40.5" width="0.8" height="10.5" fill="#fff"/><rect x="265.5" y="40.5" width="0.8" height="10.5" fill="#808080"/><rect x="266.3" y="40.5" width="0.8" height="10.5" fill="#fff"/><rect x="334.5" y="40.5" width="0.8" height="10.5" fill="#808080"/><rect x="335.3" y="40.5" width="0.8" height="10.5" fill="#fff"/><path d="M4.8 13.6L8.2 4H11L14 13.6H11.3L10.6 11.2H8.3L7.6 13.6Z" fill="#f00000"/><path d="M8.8 9.2H10.2L9.5 6.6Z" fill="#000080"/><path d="M5.5 10.3L13.5 8.8L13 10.2L6 11Z" fill="#ffd000" opacity="0.85"/><path d="M6.5 10.3L9 9.8" stroke="#20c020" stroke-width="0.8"/><path d="M12 7L13.5 5" stroke="#c0d0ff" stroke-width="0.6"/><rect x="767" y="10" width="4" height="1.2" fill="#000"/><rect x="776.6" y="5.6" width="4.8" height="4.6" fill="none" stroke="#000" stroke-width="0.8"/><rect x="776.6" y="5.4" width="4.8" height="1.2" fill="#000"/><path d="M788 5.6L792.5 10.5M792.5 5.6L788 10.5" stroke="#000" stroke-width="1.2"/><g transform="translate(9.5 19.4)"><path d="M-4.1 -4.2H4.1V4.2H-4.1Z" fill="#f00000" stroke="#202020" stroke-width="0.4"/><circle cx="-1" cy="-0.6" r="1.6" fill="none" stroke="#ffd0d0" stroke-width="0.8"/><path d="M-3.2 -3L-1 -0.6L2.5 -3M-1 -0.6L-1.5 3.5M-1 -0.6L3 1.5" stroke="#ffc8c8" stroke-width="0.7" fill="none"/><path d="M2.8 3.2L4 4.3" stroke="#00b0b0" stroke-width="0.9"/></g><rect x="772.5" y="20.2" width="3.5" height="1" fill="#000"/><rect x="781.5" y="17.8" width="3.2" height="2.8" fill="none" stroke="#000" stroke-width="0.7"/><rect x="780.5" y="18.8" width="3.2" height="2.8" fill="#c0c0c0" stroke="#000" stroke-width="0.7"/><path d="M789.8 17.8L793.3 21.2M793.3 17.8L789.8 21.2" stroke="#000" stroke-width="1"/></svg>
</body></html>
